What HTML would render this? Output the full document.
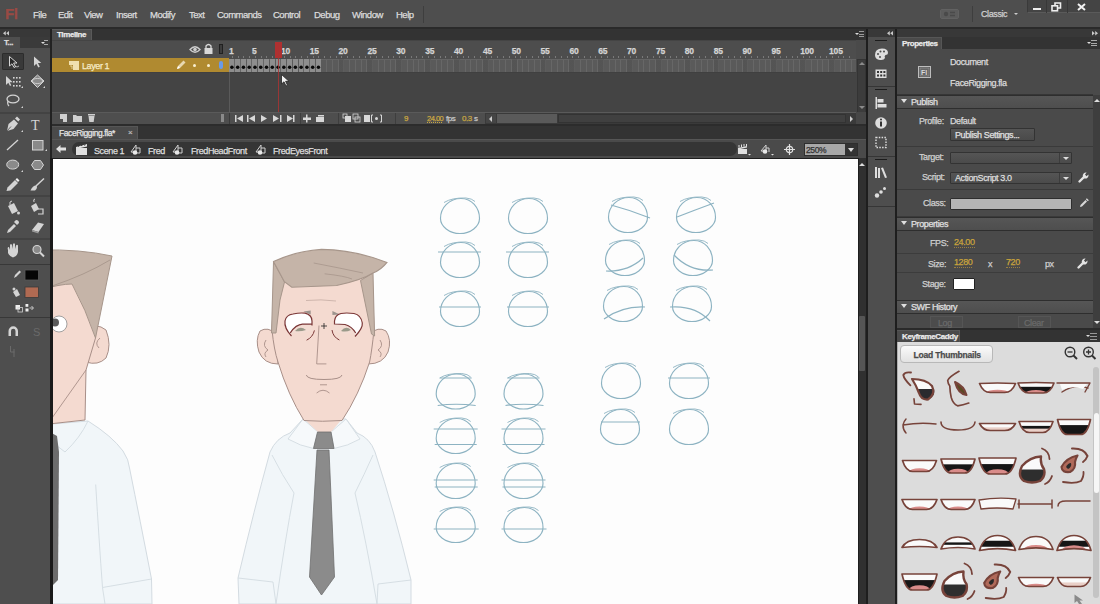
<!DOCTYPE html><html><head><meta charset="utf-8"><style>
*{margin:0;padding:0;box-sizing:border-box}
html,body{width:1100px;height:604px;overflow:hidden;background:#2c2c2c;font-family:"Liberation Sans",sans-serif;position:relative}
.a{position:absolute}
.t{position:absolute;white-space:nowrap;font-size:9px;letter-spacing:-0.4px;color:#d8d8d8;line-height:10px;-webkit-text-stroke:0.25px currentColor}
svg{position:absolute;overflow:visible}
</style></head><body><div class="a" style="left:0;top:0;width:1100px;height:27px;background:#4e4e4e"></div>
<div class="t" style="left:5px;top:6px;font-size:15px;letter-spacing:-0.5px;color:#a24a44;line-height:15px;font-weight:bold;opacity:.9">Fl</div>
<div class="t" style="left:33px;top:10px;font-size:9.5px;letter-spacing:-0.5px;color:#dcdcdc">File</div>
<div class="t" style="left:58px;top:10px;font-size:9.5px;letter-spacing:-0.5px;color:#dcdcdc">Edit</div>
<div class="t" style="left:84px;top:10px;font-size:9.5px;letter-spacing:-0.5px;color:#dcdcdc">View</div>
<div class="t" style="left:116px;top:10px;font-size:9.5px;letter-spacing:-0.5px;color:#dcdcdc">Insert</div>
<div class="t" style="left:150px;top:10px;font-size:9.5px;letter-spacing:-0.5px;color:#dcdcdc">Modify</div>
<div class="t" style="left:189px;top:10px;font-size:9.5px;letter-spacing:-0.5px;color:#dcdcdc">Text</div>
<div class="t" style="left:217px;top:10px;font-size:9.5px;letter-spacing:-0.5px;color:#dcdcdc">Commands</div>
<div class="t" style="left:273px;top:10px;font-size:9.5px;letter-spacing:-0.5px;color:#dcdcdc">Control</div>
<div class="t" style="left:314px;top:10px;font-size:9.5px;letter-spacing:-0.5px;color:#dcdcdc">Debug</div>
<div class="t" style="left:352px;top:10px;font-size:9.5px;letter-spacing:-0.5px;color:#dcdcdc">Window</div>
<div class="t" style="left:396px;top:10px;font-size:9.5px;letter-spacing:-0.5px;color:#dcdcdc">Help</div>
<div class="a" style="left:423px;top:6px;width:1px;height:17px;background:#3e3e3e"></div>
<div class="a" style="left:972px;top:6px;width:1px;height:16px;background:#3e3e3e"></div>
<div class="t" style="left:981px;top:9px;color:#d0d0d0">Classic</div>
<div class="a" style="left:1014px;top:13px;width:0;height:0;border-left:2px solid transparent;border-right:2px solid transparent;border-top:2px solid #ccc"></div>
<div class="a" style="left:1026.5px;top:0;width:73.5px;height:13px;background:#444;border-bottom:1px solid #5a5a5a;border-left:1px solid #3a3a3a"></div>
<div class="a" style="left:1046px;top:0;width:1px;height:13px;background:#383838"></div>
<div class="a" style="left:1066.5px;top:0;width:1px;height:13px;background:#383838"></div>
<div class="a" style="left:1032.5px;top:7.5px;width:8px;height:2.2px;background:#eee"></div>
<svg style="left:1051px;top:2px" width="11" height="10"><rect x="1" y="3.8" width="5.5" height="5" fill="none" stroke="#eee" stroke-width="1.6"/><path d="M4 3.5 V1 H9.5 V6 H7" fill="none" stroke="#eee" stroke-width="1.6"/></svg>
<svg style="left:1077px;top:2.5px" width="9" height="8"><path d="M1 1 L8 7 M8 1 L1 7" stroke="#f2f2f2" stroke-width="2"/></svg>
<svg style="left:940px;top:8.5px" width="19" height="10"><rect x="0.5" y="0.5" width="18" height="9" rx="1.5" fill="#5c5c5c" stroke="#626262"/><circle cx="6" cy="5" r="2.2" fill="#4a4a4a"/><path d="M10 3.5 H15 M10 6.5 H15" stroke="#4a4a4a" stroke-width="1.4"/></svg>
<div class="a" style="left:0;top:27px;width:1100px;height:2px;background:#2a2a2a"></div>
<div class="a" style="left:0;top:29px;width:50px;height:8px;background:#383838"></div>
<svg style="left:2.5px;top:31px" width="7" height="5"><path d="M0 2.2 L2.8 0 V4.4Z M3.2 2.2 L6 0 V4.4Z" fill="#c8c8c8"/></svg>
<div class="a" style="left:0;top:37px;width:50px;height:567px;background:#4e4e4e"></div>
<div class="a" style="left:20px;top:37px;width:30px;height:11px;background:#3a3a3a"></div>
<div class="t" style="left:4px;top:38px;font-size:8px;font-weight:bold;color:#ddd">T...</div>
<div class="a" style="left:41px;top:42px;width:0;height:0;border-left:2px solid transparent;border-right:2px solid transparent;border-top:2px solid #ddd"></div>
<div class="a" style="left:44px;top:40px;width:4px;height:5px;border-top:1px solid #aaa;border-bottom:1px solid #aaa"></div>
<div class="a" style="left:50px;top:29px;width:2px;height:575px;background:#222"></div>
<div class="a" style="left:2px;top:53px;width:21.5px;height:16.5px;background:#393939;border:1px solid #2c2c2c;border-radius:1px"></div>
<svg style="left:0;top:0" width="50" height="604"><path d="M9.5 56.5 L9.5 66 L12 63.8 L14 67.5 L15.5 66.8 L13.6 63 L17 63 Z" fill="#2a2a2a" stroke="#d4d4d4" stroke-width="1"/><path d="M15 66 Q17 68 19 66" fill="none" stroke="#d4d4d4" stroke-width="0.8"/><path d="M34 56.5 L34 66 L36.3 63.8 L38.3 67.5 L39.8 66.8 L37.9 63 L41.3 63 Z" fill="#d4d4d4"/><path d="M6 76 L6 85 L8.3 82.8 L10 86 L11.3 85.3 L9.7 82.2 L12.7 82.2 Z" fill="#d4d4d4"/><rect x="13" y="77" width="1.6" height="1.6" fill="#d4d4d4"/><rect x="16" y="77" width="1.6" height="1.6" fill="#d4d4d4"/><rect x="19" y="77" width="1.6" height="1.6" fill="#d4d4d4"/><rect x="13" y="81" width="1.6" height="1.6" fill="#d4d4d4"/><rect x="16" y="81" width="1.6" height="1.6" fill="#d4d4d4"/><rect x="19" y="81" width="1.6" height="1.6" fill="#d4d4d4"/><rect x="13" y="85" width="1.6" height="1.6" fill="#d4d4d4"/><rect x="16" y="85" width="1.6" height="1.6" fill="#d4d4d4"/><rect x="19" y="85" width="1.6" height="1.6" fill="#d4d4d4"/><path d="M37.5 75 L44 81 L37.5 87.5 L31 81 Z" fill="#8a8a8a" stroke="#d4d4d4" stroke-width="1"/><ellipse cx="37.5" cy="81" rx="5" ry="2.5" fill="none" stroke="#d4d4d4" stroke-width="0.9"/><ellipse cx="13" cy="99" rx="6" ry="3.8" fill="none" stroke="#d4d4d4" stroke-width="1.3"/><path d="M8 101 Q7 104 9 106" fill="none" stroke="#d4d4d4" stroke-width="1.2"/><path d="M7 131 L8.5 124 L14 119.5 L18 123.5 L13.5 129 Z" fill="#d4d4d4"/><path d="M7 131 L11 126.5" stroke="#4b4b4b" stroke-width="0.8"/><path d="M15 118.5 L17 116.5 L20 119.5 L18.3 121.5" fill="#d4d4d4"/><text x="31" y="130" font-family="Liberation Serif" font-size="14" fill="#d4d4d4">T</text><path d="M7 150 L18 140" stroke="#d4d4d4" stroke-width="1.3"/><rect x="32.5" y="140.5" width="10.5" height="9.5" fill="#8a8a8a" stroke="#d4d4d4" stroke-width="1"/><ellipse cx="12.7" cy="164.6" rx="6" ry="4.5" fill="#8a8a8a" stroke="#d4d4d4" stroke-width="1"/><path d="M34.5 160.5 L40.5 160.5 L43.5 165 L40.5 169.5 L34.5 169.5 L31.5 165 Z" fill="#8a8a8a" stroke="#d4d4d4" stroke-width="1"/><path d="M6.5 191 L7.5 187.5 L15 180 L18 183 L10.5 190.5 Z" fill="#d4d4d4"/><path d="M15.5 179.5 L17 178 L19.5 180.5 L18 182" fill="#f0f0f0"/><path d="M36 186 L44 178.5" stroke="#d4d4d4" stroke-width="1.5"/><path d="M30.5 190.5 Q33 185 36.5 185.5 Q38 188 35 190.5 Z" fill="#d4d4d4"/><path d="M8 206 L14 203 L18 211 L12 214 Z" fill="#d4d4d4"/><path d="M10 205 Q9 201 12 201" fill="none" stroke="#d4d4d4" stroke-width="1"/><circle cx="18.5" cy="213" r="1.5" fill="#d4d4d4"/><path d="M31 206 L36 203 L39 209 L34 212 Z" fill="#d4d4d4"/><path d="M34 202 Q33 199 35 199" fill="none" stroke="#d4d4d4" stroke-width="1"/><path d="M38 209 H43 V214 H38" fill="none" stroke="#d4d4d4" stroke-width="1.2"/><path d="M7 233 L8 230 L14 224 L16 226 L10 232 Z" fill="#d4d4d4"/><path d="M14 222 L16 220 Q19 220 19 223 L17 225 Z" fill="#d4d4d4"/><path d="M32 230 L38 222.5 L44 224 L38.5 232 Z" fill="#d4d4d4"/><path d="M32 230 L38.5 232 L38.5 233.5 L32 231.5Z" fill="#9a9a9a"/><path d="M8 250 Q7 247 9 247 L10 250 L10 245 Q11 243 12 245 L12.5 249 L13 244 Q14 242.5 15 244 L15 249 L16 245.5 Q17 244 18 245.5 L18 252 Q17 257 13 257.5 Q10 257 8 253 Z" fill="#d4d4d4"/><circle cx="37" cy="249.5" r="4" fill="#8a8a8a" stroke="#d4d4d4" stroke-width="1.2"/><path d="M40 252.5 L44 256.5" stroke="#d4d4d4" stroke-width="2"/><path d="M14 278 L15 275 L19.5 270.5 L21 272 L16.5 276.5 Z" fill="#d4d4d4"/><rect x="25" y="270" width="13.5" height="10" fill="#050505" stroke="#5a5a5a" stroke-width="0.8"/><path d="M13 292 L17 289 L20 295 L16 297 Z" fill="#d4d4d4"/><circle cx="14" cy="289" r="1.5" fill="#d4d4d4"/><rect x="25" y="287" width="13.5" height="10.5" fill="#b06a52" stroke="#3a3a3a" stroke-width="0.8"/><rect x="15.5" y="305" width="4.5" height="4.5" fill="#eee"/><rect x="18" y="307.5" width="4.5" height="4.5" fill="none" stroke="#d4d4d4" stroke-width="0.8"/><rect x="25.5" y="304" width="2.8" height="2.8" fill="#eee"/><rect x="25.5" y="308.5" width="3" height="3" fill="#eee"/><path d="M29.5 308 H33 M31.5 306 L33.5 308 L31.5 310" fill="none" stroke="#d4d4d4" stroke-width="0.9"/><path d="M8.5 336 V331 A4.7 4.7 0 0 1 18 331 V336 H15.5 V331 A2.2 2.2 0 0 0 11 331 V336 Z" fill="#d4d4d4"/><text x="33" y="336" font-family="Liberation Sans" font-size="11" fill="#6a6a6a">S</text><path d="M10.5 346 V352 H14.5 M14 349 V357" fill="none" stroke="#6a6a6a" stroke-width="1"/><path d="M21 88 h2 v-2z M43 88 h2 v-2z M21 108 h2 v-2z M21 132 h2 v-2z M45 151 h2 v-2z M21 172 h2 v-2z" fill="#d4d4d4"/><rect x="0" y="112.5" width="50" height="1" fill="#383838"/><rect x="0" y="195.5" width="50" height="1" fill="#383838"/><rect x="0" y="238.5" width="50" height="1" fill="#383838"/><rect x="0" y="264" width="50" height="1" fill="#383838"/><rect x="0" y="317" width="50" height="1" fill="#383838"/></svg>
<div class="a" style="left:52px;top:29px;width:814px;height:11px;background:#333"></div>
<div class="a" style="left:52px;top:29px;width:40px;height:12px;background:#4d4d4d;border-top:1px solid #5a5a5a;border-right:1px solid #5a5a5a"></div>
<div class="t" style="left:57px;top:30px;font-size:8px;font-weight:bold;color:#eaeaea">Timeline</div>
<div class="a" style="left:52px;top:40px;width:814px;height:84px;background:#444"></div>
<div class="a" style="left:52px;top:40.5px;width:804px;height:18px;background:#4d4d4d"></div>
<svg style="left:189px;top:45px" width="12" height="9"><path d="M1 4.5 Q6 -1 11 4.5 Q6 10 1 4.5Z" fill="none" stroke="#cfcfcf" stroke-width="1.3"/><circle cx="6" cy="4.5" r="1.8" fill="#cfcfcf"/></svg>
<svg style="left:204px;top:43px" width="9" height="11"><path d="M2 5 V3 Q4.5 0 7 3 V5" fill="none" stroke="#d8d8d8" stroke-width="1.3"/><rect x="0.5" y="5" width="8" height="6" fill="#d8d8d8"/></svg>
<div class="a" style="left:219px;top:44px;width:4px;height:10px;border:1px solid #202020;background:#3c3c3c"></div>
<div class="a" style="left:231.8px;top:56px;width:1px;height:2px;background:#7a7a7a"></div><div class="a" style="left:237.6px;top:56px;width:1px;height:2px;background:#7a7a7a"></div><div class="a" style="left:243.3px;top:56px;width:1px;height:2px;background:#7a7a7a"></div><div class="a" style="left:249.1px;top:56px;width:1px;height:2px;background:#7a7a7a"></div><div class="a" style="left:254.9px;top:56px;width:1px;height:2px;background:#7a7a7a"></div><div class="a" style="left:260.7px;top:56px;width:1px;height:2px;background:#7a7a7a"></div><div class="a" style="left:266.4px;top:56px;width:1px;height:2px;background:#7a7a7a"></div><div class="a" style="left:272.2px;top:56px;width:1px;height:2px;background:#7a7a7a"></div><div class="a" style="left:278.0px;top:56px;width:1px;height:2px;background:#7a7a7a"></div><div class="a" style="left:283.7px;top:56px;width:1px;height:2px;background:#7a7a7a"></div><div class="a" style="left:289.5px;top:56px;width:1px;height:2px;background:#7a7a7a"></div><div class="a" style="left:295.3px;top:56px;width:1px;height:2px;background:#7a7a7a"></div><div class="a" style="left:301.0px;top:56px;width:1px;height:2px;background:#7a7a7a"></div><div class="a" style="left:306.8px;top:56px;width:1px;height:2px;background:#7a7a7a"></div><div class="a" style="left:312.6px;top:56px;width:1px;height:2px;background:#7a7a7a"></div><div class="a" style="left:318.4px;top:56px;width:1px;height:2px;background:#7a7a7a"></div><div class="a" style="left:324.1px;top:56px;width:1px;height:2px;background:#7a7a7a"></div><div class="a" style="left:329.9px;top:56px;width:1px;height:2px;background:#7a7a7a"></div><div class="a" style="left:335.7px;top:56px;width:1px;height:2px;background:#7a7a7a"></div><div class="a" style="left:341.4px;top:56px;width:1px;height:2px;background:#7a7a7a"></div><div class="a" style="left:347.2px;top:56px;width:1px;height:2px;background:#7a7a7a"></div><div class="a" style="left:353.0px;top:56px;width:1px;height:2px;background:#7a7a7a"></div><div class="a" style="left:358.7px;top:56px;width:1px;height:2px;background:#7a7a7a"></div><div class="a" style="left:364.5px;top:56px;width:1px;height:2px;background:#7a7a7a"></div><div class="a" style="left:370.3px;top:56px;width:1px;height:2px;background:#7a7a7a"></div><div class="a" style="left:376.1px;top:56px;width:1px;height:2px;background:#7a7a7a"></div><div class="a" style="left:381.8px;top:56px;width:1px;height:2px;background:#7a7a7a"></div><div class="a" style="left:387.6px;top:56px;width:1px;height:2px;background:#7a7a7a"></div><div class="a" style="left:393.4px;top:56px;width:1px;height:2px;background:#7a7a7a"></div><div class="a" style="left:399.1px;top:56px;width:1px;height:2px;background:#7a7a7a"></div><div class="a" style="left:404.9px;top:56px;width:1px;height:2px;background:#7a7a7a"></div><div class="a" style="left:410.7px;top:56px;width:1px;height:2px;background:#7a7a7a"></div><div class="a" style="left:416.4px;top:56px;width:1px;height:2px;background:#7a7a7a"></div><div class="a" style="left:422.2px;top:56px;width:1px;height:2px;background:#7a7a7a"></div><div class="a" style="left:428.0px;top:56px;width:1px;height:2px;background:#7a7a7a"></div><div class="a" style="left:433.8px;top:56px;width:1px;height:2px;background:#7a7a7a"></div><div class="a" style="left:439.5px;top:56px;width:1px;height:2px;background:#7a7a7a"></div><div class="a" style="left:445.3px;top:56px;width:1px;height:2px;background:#7a7a7a"></div><div class="a" style="left:451.1px;top:56px;width:1px;height:2px;background:#7a7a7a"></div><div class="a" style="left:456.8px;top:56px;width:1px;height:2px;background:#7a7a7a"></div><div class="a" style="left:462.6px;top:56px;width:1px;height:2px;background:#7a7a7a"></div><div class="a" style="left:468.4px;top:56px;width:1px;height:2px;background:#7a7a7a"></div><div class="a" style="left:474.1px;top:56px;width:1px;height:2px;background:#7a7a7a"></div><div class="a" style="left:479.9px;top:56px;width:1px;height:2px;background:#7a7a7a"></div><div class="a" style="left:485.7px;top:56px;width:1px;height:2px;background:#7a7a7a"></div><div class="a" style="left:491.4px;top:56px;width:1px;height:2px;background:#7a7a7a"></div><div class="a" style="left:497.2px;top:56px;width:1px;height:2px;background:#7a7a7a"></div><div class="a" style="left:503.0px;top:56px;width:1px;height:2px;background:#7a7a7a"></div><div class="a" style="left:508.8px;top:56px;width:1px;height:2px;background:#7a7a7a"></div><div class="a" style="left:514.5px;top:56px;width:1px;height:2px;background:#7a7a7a"></div><div class="a" style="left:520.3px;top:56px;width:1px;height:2px;background:#7a7a7a"></div><div class="a" style="left:526.1px;top:56px;width:1px;height:2px;background:#7a7a7a"></div><div class="a" style="left:531.8px;top:56px;width:1px;height:2px;background:#7a7a7a"></div><div class="a" style="left:537.6px;top:56px;width:1px;height:2px;background:#7a7a7a"></div><div class="a" style="left:543.4px;top:56px;width:1px;height:2px;background:#7a7a7a"></div><div class="a" style="left:549.1px;top:56px;width:1px;height:2px;background:#7a7a7a"></div><div class="a" style="left:554.9px;top:56px;width:1px;height:2px;background:#7a7a7a"></div><div class="a" style="left:560.7px;top:56px;width:1px;height:2px;background:#7a7a7a"></div><div class="a" style="left:566.5px;top:56px;width:1px;height:2px;background:#7a7a7a"></div><div class="a" style="left:572.2px;top:56px;width:1px;height:2px;background:#7a7a7a"></div><div class="a" style="left:578.0px;top:56px;width:1px;height:2px;background:#7a7a7a"></div><div class="a" style="left:583.8px;top:56px;width:1px;height:2px;background:#7a7a7a"></div><div class="a" style="left:589.5px;top:56px;width:1px;height:2px;background:#7a7a7a"></div><div class="a" style="left:595.3px;top:56px;width:1px;height:2px;background:#7a7a7a"></div><div class="a" style="left:601.1px;top:56px;width:1px;height:2px;background:#7a7a7a"></div><div class="a" style="left:606.8px;top:56px;width:1px;height:2px;background:#7a7a7a"></div><div class="a" style="left:612.6px;top:56px;width:1px;height:2px;background:#7a7a7a"></div><div class="a" style="left:618.4px;top:56px;width:1px;height:2px;background:#7a7a7a"></div><div class="a" style="left:624.2px;top:56px;width:1px;height:2px;background:#7a7a7a"></div><div class="a" style="left:629.9px;top:56px;width:1px;height:2px;background:#7a7a7a"></div><div class="a" style="left:635.7px;top:56px;width:1px;height:2px;background:#7a7a7a"></div><div class="a" style="left:641.5px;top:56px;width:1px;height:2px;background:#7a7a7a"></div><div class="a" style="left:647.2px;top:56px;width:1px;height:2px;background:#7a7a7a"></div><div class="a" style="left:653.0px;top:56px;width:1px;height:2px;background:#7a7a7a"></div><div class="a" style="left:658.8px;top:56px;width:1px;height:2px;background:#7a7a7a"></div><div class="a" style="left:664.5px;top:56px;width:1px;height:2px;background:#7a7a7a"></div><div class="a" style="left:670.3px;top:56px;width:1px;height:2px;background:#7a7a7a"></div><div class="a" style="left:676.1px;top:56px;width:1px;height:2px;background:#7a7a7a"></div><div class="a" style="left:681.9px;top:56px;width:1px;height:2px;background:#7a7a7a"></div><div class="a" style="left:687.6px;top:56px;width:1px;height:2px;background:#7a7a7a"></div><div class="a" style="left:693.4px;top:56px;width:1px;height:2px;background:#7a7a7a"></div><div class="a" style="left:699.2px;top:56px;width:1px;height:2px;background:#7a7a7a"></div><div class="a" style="left:704.9px;top:56px;width:1px;height:2px;background:#7a7a7a"></div><div class="a" style="left:710.7px;top:56px;width:1px;height:2px;background:#7a7a7a"></div><div class="a" style="left:716.5px;top:56px;width:1px;height:2px;background:#7a7a7a"></div><div class="a" style="left:722.2px;top:56px;width:1px;height:2px;background:#7a7a7a"></div><div class="a" style="left:728.0px;top:56px;width:1px;height:2px;background:#7a7a7a"></div><div class="a" style="left:733.8px;top:56px;width:1px;height:2px;background:#7a7a7a"></div><div class="a" style="left:739.6px;top:56px;width:1px;height:2px;background:#7a7a7a"></div><div class="a" style="left:745.3px;top:56px;width:1px;height:2px;background:#7a7a7a"></div><div class="a" style="left:751.1px;top:56px;width:1px;height:2px;background:#7a7a7a"></div><div class="a" style="left:756.9px;top:56px;width:1px;height:2px;background:#7a7a7a"></div><div class="a" style="left:762.6px;top:56px;width:1px;height:2px;background:#7a7a7a"></div><div class="a" style="left:768.4px;top:56px;width:1px;height:2px;background:#7a7a7a"></div><div class="a" style="left:774.2px;top:56px;width:1px;height:2px;background:#7a7a7a"></div><div class="a" style="left:780.0px;top:56px;width:1px;height:2px;background:#7a7a7a"></div><div class="a" style="left:785.7px;top:56px;width:1px;height:2px;background:#7a7a7a"></div><div class="a" style="left:791.5px;top:56px;width:1px;height:2px;background:#7a7a7a"></div><div class="a" style="left:797.3px;top:56px;width:1px;height:2px;background:#7a7a7a"></div><div class="a" style="left:803.0px;top:56px;width:1px;height:2px;background:#7a7a7a"></div><div class="a" style="left:808.8px;top:56px;width:1px;height:2px;background:#7a7a7a"></div><div class="a" style="left:814.6px;top:56px;width:1px;height:2px;background:#7a7a7a"></div><div class="a" style="left:820.3px;top:56px;width:1px;height:2px;background:#7a7a7a"></div><div class="a" style="left:826.1px;top:56px;width:1px;height:2px;background:#7a7a7a"></div><div class="a" style="left:831.9px;top:56px;width:1px;height:2px;background:#7a7a7a"></div><div class="a" style="left:837.6px;top:56px;width:1px;height:2px;background:#7a7a7a"></div><div class="a" style="left:843.4px;top:56px;width:1px;height:2px;background:#7a7a7a"></div><div class="a" style="left:849.2px;top:56px;width:1px;height:2px;background:#7a7a7a"></div>
<div class="t" style="left:229.0px;top:46px;font-size:8.5px;letter-spacing:-0.2px;color:#d4d4d4;font-weight:bold">1</div>
<div class="t" style="left:252.1px;top:46px;font-size:8.5px;letter-spacing:-0.2px;color:#d4d4d4;font-weight:bold">5</div>
<div class="t" style="left:280.9px;top:46px;font-size:8.5px;letter-spacing:-0.2px;color:#d4d4d4;font-weight:bold">10</div>
<div class="t" style="left:309.8px;top:46px;font-size:8.5px;letter-spacing:-0.2px;color:#d4d4d4;font-weight:bold">15</div>
<div class="t" style="left:338.6px;top:46px;font-size:8.5px;letter-spacing:-0.2px;color:#d4d4d4;font-weight:bold">20</div>
<div class="t" style="left:367.5px;top:46px;font-size:8.5px;letter-spacing:-0.2px;color:#d4d4d4;font-weight:bold">25</div>
<div class="t" style="left:396.3px;top:46px;font-size:8.5px;letter-spacing:-0.2px;color:#d4d4d4;font-weight:bold">30</div>
<div class="t" style="left:425.2px;top:46px;font-size:8.5px;letter-spacing:-0.2px;color:#d4d4d4;font-weight:bold">35</div>
<div class="t" style="left:454.0px;top:46px;font-size:8.5px;letter-spacing:-0.2px;color:#d4d4d4;font-weight:bold">40</div>
<div class="t" style="left:482.9px;top:46px;font-size:8.5px;letter-spacing:-0.2px;color:#d4d4d4;font-weight:bold">45</div>
<div class="t" style="left:511.7px;top:46px;font-size:8.5px;letter-spacing:-0.2px;color:#d4d4d4;font-weight:bold">50</div>
<div class="t" style="left:540.6px;top:46px;font-size:8.5px;letter-spacing:-0.2px;color:#d4d4d4;font-weight:bold">55</div>
<div class="t" style="left:569.4px;top:46px;font-size:8.5px;letter-spacing:-0.2px;color:#d4d4d4;font-weight:bold">60</div>
<div class="t" style="left:598.3px;top:46px;font-size:8.5px;letter-spacing:-0.2px;color:#d4d4d4;font-weight:bold">65</div>
<div class="t" style="left:627.1px;top:46px;font-size:8.5px;letter-spacing:-0.2px;color:#d4d4d4;font-weight:bold">70</div>
<div class="t" style="left:656.0px;top:46px;font-size:8.5px;letter-spacing:-0.2px;color:#d4d4d4;font-weight:bold">75</div>
<div class="t" style="left:684.8px;top:46px;font-size:8.5px;letter-spacing:-0.2px;color:#d4d4d4;font-weight:bold">80</div>
<div class="t" style="left:713.7px;top:46px;font-size:8.5px;letter-spacing:-0.2px;color:#d4d4d4;font-weight:bold">85</div>
<div class="t" style="left:742.5px;top:46px;font-size:8.5px;letter-spacing:-0.2px;color:#d4d4d4;font-weight:bold">90</div>
<div class="t" style="left:771.4px;top:46px;font-size:8.5px;letter-spacing:-0.2px;color:#d4d4d4;font-weight:bold">95</div>
<div class="t" style="left:800.2px;top:46px;font-size:8.5px;letter-spacing:-0.2px;color:#d4d4d4;font-weight:bold">100</div>
<div class="t" style="left:829.1px;top:46px;font-size:8.5px;letter-spacing:-0.2px;color:#d4d4d4;font-weight:bold">105</div>
<div class="a" style="left:52px;top:58px;width:177px;height:14px;background:#b08a30"></div>
<svg style="left:69px;top:61px" width="10" height="9"><rect x="0" y="0" width="10" height="9" fill="#f0e0b0"/><path d="M0 9 L0 4 L4 4 L4 9Z" fill="#b08a30"/><path d="M1 5 h2 v3" fill="none" stroke="#f0e0b0" stroke-width="0.8"/></svg>
<div class="t" style="left:82px;top:61px;font-size:9px;color:#f6ecc8">Layer 1</div>
<svg style="left:176px;top:60px" width="10" height="10"><path d="M1 9 L2 6 L7.5 0.5 L9.5 2.5 L4 8 Z" fill="#e8d8b0"/><path d="M1 9 L2 6 L4 8Z" fill="#fff"/></svg>
<div class="a" style="left:193px;top:64px;width:3px;height:3px;border-radius:50%;background:#f8eed0"></div>
<div class="a" style="left:207px;top:64px;width:3px;height:3px;border-radius:50%;background:#f8eed0"></div>
<div class="a" style="left:219px;top:61px;width:4px;height:8px;border-radius:2px;background:#6a9ae8"></div>
<div class="a" style="left:229px;top:58.5px;width:627px;height:13.5px;background:repeating-linear-gradient(90deg,#5a5a5a 0,#5a5a5a 4.77px,#676767 4.77px,#676767 5.77px);border-top:1px solid #646464"></div>
<div class="a" style="left:229px;top:58px;width:627px;height:14px;background:repeating-linear-gradient(90deg,transparent 0,transparent 23.08px,#4a4a4a 23.08px,#4a4a4a 28.85px);opacity:.35"></div>
<div class="a" style="left:229.3px;top:59px;width:4.9px;height:13px;background:#8e8e8e"></div><div class="a" style="left:235.1px;top:59px;width:4.9px;height:13px;background:#8e8e8e"></div><div class="a" style="left:240.8px;top:59px;width:4.9px;height:13px;background:#8e8e8e"></div><div class="a" style="left:246.6px;top:59px;width:4.9px;height:13px;background:#8e8e8e"></div><div class="a" style="left:252.4px;top:59px;width:4.9px;height:13px;background:#8e8e8e"></div><div class="a" style="left:258.2px;top:59px;width:4.9px;height:13px;background:#8e8e8e"></div><div class="a" style="left:263.9px;top:59px;width:4.9px;height:13px;background:#8e8e8e"></div><div class="a" style="left:269.7px;top:59px;width:4.9px;height:13px;background:#8e8e8e"></div><div class="a" style="left:275.5px;top:59px;width:4.9px;height:13px;background:#8e8e8e"></div><div class="a" style="left:281.2px;top:59px;width:4.9px;height:13px;background:#8e8e8e"></div><div class="a" style="left:287.0px;top:59px;width:4.9px;height:13px;background:#8e8e8e"></div><div class="a" style="left:292.8px;top:59px;width:4.9px;height:13px;background:#8e8e8e"></div><div class="a" style="left:298.5px;top:59px;width:4.9px;height:13px;background:#8e8e8e"></div><div class="a" style="left:304.3px;top:59px;width:4.9px;height:13px;background:#8e8e8e"></div><div class="a" style="left:310.1px;top:59px;width:4.9px;height:13px;background:#8e8e8e"></div><div class="a" style="left:315.9px;top:59px;width:4.9px;height:13px;background:#8e8e8e"></div>
<svg style="left:0;top:0" width="400" height="80"><circle cx="231.90" cy="67.3" r="1.75" fill="#080808"/><circle cx="237.67" cy="67.3" r="1.75" fill="#080808"/><circle cx="243.44" cy="67.3" r="1.75" fill="#080808"/><circle cx="249.21" cy="67.3" r="1.75" fill="#080808"/><circle cx="254.98" cy="67.3" r="1.75" fill="#080808"/><circle cx="260.75" cy="67.3" r="1.75" fill="#080808"/><circle cx="266.52" cy="67.3" r="1.75" fill="#080808"/><circle cx="272.29" cy="67.3" r="1.75" fill="#080808"/><circle cx="278.06" cy="67.3" r="1.75" fill="#080808"/><circle cx="283.83" cy="67.3" r="1.75" fill="#080808"/><circle cx="289.60" cy="67.3" r="1.75" fill="#080808"/><circle cx="295.37" cy="67.3" r="1.75" fill="#080808"/><circle cx="301.14" cy="67.3" r="1.75" fill="#080808"/><circle cx="306.91" cy="67.3" r="1.75" fill="#080808"/><circle cx="312.68" cy="67.3" r="1.75" fill="#080808"/><circle cx="318.45" cy="67.3" r="1.75" fill="#080808"/></svg>
<div class="a" style="left:52px;top:72px;width:804px;height:1px;background:#404040"></div>
<div class="a" style="left:229px;top:72px;width:1px;height:40px;background:#5a5a5a"></div>
<div class="a" style="left:274.5px;top:42px;width:7px;height:16px;background:#b03030"></div>
<div class="a" style="left:277.5px;top:42px;width:1px;height:70px;background:#a83434;opacity:.85"></div>
<svg style="left:281px;top:74px" width="9" height="13"><path d="M0.5 0.5 L0.5 10 L3 7.8 L5 12 L6.5 11.3 L4.6 7.3 L8 7.3 Z" fill="#f2f2f2" stroke="#222" stroke-width="0.8"/></svg>
<div class="a" style="left:856px;top:40px;width:10px;height:18.5px;background:#4a4a4a"></div>
<div class="a" style="left:857px;top:58.5px;width:9px;height:54px;background:#3c3c3c;border:1px solid #343434"></div>
<div class="a" style="left:858.5px;top:62px;width:0;height:0;border-left:3px solid transparent;border-right:3px solid transparent;border-bottom:3px solid #8a8a8a"></div>
<div class="a" style="left:858.5px;top:106px;width:0;height:0;border-left:3px solid transparent;border-right:3px solid transparent;border-top:3px solid #8a8a8a"></div>
<div class="a" style="left:855px;top:33px;width:0;height:0;border-left:2px solid transparent;border-right:2px solid transparent;border-top:2px solid #ddd"></div>
<div class="a" style="left:859px;top:31px;width:5px;height:6px;border-top:1px solid #999;border-bottom:1px solid #999;background:linear-gradient(#999,#999) 0 2px/5px 1px no-repeat"></div>
<div class="a" style="left:52px;top:112px;width:804px;height:12px;background:#4e4e4e;border-top:1px solid #5a5a5a"></div>
<svg style="left:60px;top:114px" width="40" height="9"><rect x="0" y="0" width="7" height="8" fill="#cfcfcf"/><rect x="0" y="5" width="3" height="3" fill="#4e4e4e"/><path d="M13 1 h3 l1 1 h5 v6 h-9z" fill="#cfcfcf"/><rect x="28" y="0" width="7" height="1.5" fill="#cfcfcf"/><path d="M28.5 2 h6 l-0.8 6 h-4.4z" fill="#cfcfcf"/></svg>
<div class="a" style="left:221px;top:114px;width:3px;height:8px;background:#8a8a8a"></div>
<div class="a" style="left:229px;top:113px;width:1px;height:11px;background:#3a3a3a"></div>
<svg style="left:233px;top:114px" width="180" height="9" fill="#d8d8d8"><rect x="2" y="1" width="1.5" height="7"/><path d="M10 1 L4 4.5 L10 8Z"/><rect x="14" y="1" width="1.5" height="7"/><path d="M22 1 L16 4.5 L22 8Z"/><path d="M28 1 L34 4.5 L28 8Z"/><path d="M40 1 L46 4.5 L40 8Z"/><rect x="47" y="1" width="1.5" height="7"/><path d="M54 1 L60 4.5 L54 8Z"/><rect x="60" y="1" width="1.5" height="7"/><rect x="73" y="0.5" width="1.5" height="8"/><rect x="70" y="3.5" width="8" height="2.5"/><path d="M83 3 h8 v5 h-8z M85 1 h6 v1.5 h-6z"/><rect x="112" y="2" width="6" height="6"/><rect x="110" y="0" width="4" height="4" fill="none" stroke="#d8d8d8" stroke-width="0.8"/><rect x="120" y="0" width="5" height="5" fill="none" stroke="#d8d8d8" stroke-width="0.8"/><rect x="122" y="3" width="5" height="5" fill="none" stroke="#d8d8d8" stroke-width="0.8"/><rect x="131" y="1" width="6" height="7"/><path d="M140 1 h-1.5 v7 h1.5 M147 1 h1.5 v7 h-1.5" fill="none" stroke="#d8d8d8" stroke-width="1"/><circle cx="143.5" cy="4.5" r="1.5"/></svg>
<div class="a" style="left:300px;top:113px;width:1px;height:11px;background:#3e3e3e"></div>
<div class="a" style="left:338px;top:113px;width:1px;height:11px;background:#3e3e3e"></div>
<div class="a" style="left:395px;top:113px;width:1px;height:11px;background:#3e3e3e"></div>
<div class="t" style="left:404px;top:114px;font-size:8px;color:#c8a642">9</div>
<div class="t" style="left:427px;top:114px;font-size:7.5px;letter-spacing:-0.5px;color:#c8a642;text-decoration:underline dotted">24.00</div>
<div class="t" style="left:446px;top:114px;font-size:8px;color:#c8c8c8">fps</div>
<div class="t" style="left:462px;top:114px;font-size:8px;color:#c8a642">0.3</div>
<div class="t" style="left:474px;top:114px;font-size:8px;color:#c8c8c8">s</div>
<div class="a" style="left:485px;top:113px;width:371px;height:11px;background:#3a3a3a"></div>
<div class="a" style="left:486px;top:114px;width:10px;height:9px;background:#454545"></div>
<div class="a" style="left:489px;top:115.5px;width:0;height:0;border-top:3px solid transparent;border-bottom:3px solid transparent;border-right:3px solid #ccc"></div>
<div class="a" style="left:497px;top:114px;width:60px;height:9px;background:#5a5a5a"></div>
<div class="a" style="left:558px;top:114px;width:288px;height:9px;background:#404040;border:1px solid #333"></div>
<div class="a" style="left:850px;top:115.5px;width:0;height:0;border-top:3px solid transparent;border-bottom:3px solid transparent;border-left:3px solid #ccc"></div>
<div class="a" style="left:856px;top:112px;width:10px;height:12px;background:#474747"></div>
<div class="a" style="left:52px;top:124px;width:814px;height:2px;background:#2c2c2c"></div>
<div class="a" style="left:52px;top:126px;width:814px;height:13px;background:#333"></div>
<div class="a" style="left:52px;top:126px;width:86px;height:13px;background:#4a4a4a;border-top:1px solid #565656;border-right:1px solid #565656"></div>
<div class="t" style="left:59px;top:128px;font-size:8.5px;color:#e6e6e6">FaceRigging.fla*</div>
<div class="t" style="left:128px;top:128px;font-size:8px;color:#bbb">&#215;</div>
<div class="a" style="left:52px;top:139px;width:814px;height:19px;background:#4a4a4a;border-top:1px solid #565656"></div>
<div class="a" style="left:72px;top:142px;width:665px;height:14px;background:#353535;border-radius:7px"></div>
<svg style="left:56px;top:145px" width="10" height="8"><path d="M0 4 L4.5 0 V2.5 H10 V5.5 H4.5 V8Z" fill="#e0e0e0"/></svg>
<svg style="left:76px;top:144px" width="12" height="11"><path d="M0 4 h11 v7 h-11z" fill="#e0e0e0"/><path d="M0 3 L11 0 L11 2.5 L0 5z" fill="#e0e0e0"/><path d="M2 2.5 L3.5 1.7 M5 1.7 L6.5 1 M8 1.2 L9.5 0.7" stroke="#3c3c3c" stroke-width="1"/></svg>
<div class="t" style="left:94px;top:146px;font-size:9px;color:#dedede">Scene 1</div>
<svg style="left:130px;top:144px" width="12" height="11"><path d="M1 8 L6 1 L6 8 Z" fill="none" stroke="#d0d0d0" stroke-width="1"/><path d="M6 4 h4 v5 h-4" fill="none" stroke="#d0d0d0" stroke-width="1"/><circle cx="5" cy="8.5" r="2.3" fill="#e8e8e8"/></svg>
<div class="t" style="left:148px;top:146px;font-size:9px;color:#dedede">Fred</div>
<svg style="left:172px;top:144px" width="12" height="11"><path d="M1 8 L6 1 L6 8 Z" fill="none" stroke="#d0d0d0" stroke-width="1"/><path d="M6 4 h4 v5 h-4" fill="none" stroke="#d0d0d0" stroke-width="1"/><circle cx="5" cy="8.5" r="2.3" fill="#e8e8e8"/></svg>
<div class="t" style="left:191px;top:146px;font-size:9px;color:#dedede">FredHeadFront</div>
<svg style="left:255px;top:144px" width="12" height="11"><path d="M1 8 L6 1 L6 8 Z" fill="none" stroke="#d0d0d0" stroke-width="1"/><path d="M6 4 h4 v5 h-4" fill="none" stroke="#d0d0d0" stroke-width="1"/><circle cx="5" cy="8.5" r="2.3" fill="#e8e8e8"/></svg>
<div class="t" style="left:273px;top:146px;font-size:9px;color:#dedede">FredEyesFront</div>
<svg style="left:738px;top:144px" width="14" height="12"><path d="M0 5 h9 v5 h-9z" fill="#e0e0e0"/><path d="M0 4 L9 2 V3.5 L0 5.5z" fill="#e0e0e0"/><path d="M1 3.5 V1 M3.5 3 V0.5 M6 2.5 V0 M8.5 2 V0" stroke="#e0e0e0" stroke-width="1"/><path d="M10 10 h3 l-1.5 1.5z" fill="#e0e0e0"/></svg>
<svg style="left:760px;top:144px" width="16" height="12"><path d="M1 7 L6 1 L6 7 Z" fill="none" stroke="#d0d0d0" stroke-width="1"/><path d="M6 4 h3 v4" fill="none" stroke="#d0d0d0" stroke-width="1"/><circle cx="5" cy="7.5" r="2.3" fill="#e8e8e8"/><path d="M11 10 h3 l-1.5 1.5z" fill="#e0e0e0"/></svg>
<svg style="left:784px;top:144px" width="11" height="11"><circle cx="5.5" cy="5.5" r="3.2" fill="none" stroke="#e0e0e0" stroke-width="1.2"/><path d="M5.5 0 V11 M0 5.5 H11" stroke="#e0e0e0" stroke-width="1.2"/></svg>
<div class="a" style="left:804px;top:143px;width:54px;height:13px;background:#333;border:1px solid #2e2e2e"></div>
<div class="a" style="left:805px;top:144px;width:40px;height:11px;background:#a8a8a8"></div>
<div class="t" style="left:806px;top:145px;font-size:8.5px;color:#333">250%</div>
<div class="a" style="left:848px;top:148px;width:0;height:0;border-left:3px solid transparent;border-right:3px solid transparent;border-top:4px solid #ddd"></div>
<div class="a" style="left:52px;top:158px;width:806px;height:446px;background:#fdfdfd"></div>
<div class="a" style="left:52px;top:158px;width:806px;height:446px;overflow:hidden"><svg style="left:-52px;top:-158px" width="1100" height="604" viewBox="0 0 1100 604"><path d="M303 419 L290 433 Q276 438 270 452 Q254 510 238 578 L239 604 L411 604 L411 580 Q394 510 375 452 Q370 438 357 433 L346 419 Z" fill="#f1f6f9" stroke="#d3dbe1" stroke-width="1"/><path d="M238 578 L273 582 L276 604 M411 580 L378 584 L377 604 M294 493 Q285 540 276 604 M355 493 Q366 540 377 604 M272 455 Q282 475 294 493 M373 455 Q364 475 355 493" fill="none" stroke="#d3dbe1" stroke-width="0.9"/><path d="M303 419 L318 432 L313.5 448.5 Q300 446 288 439 Z M346 419 L331 432 L334 448.5 Q348 446 360 439 Z" fill="#f6f9fb" stroke="#d3dbe1" stroke-width="0.9"/><path d="M303 418 L343 418 L331 432 L318 432 Z" fill="#f4dad0"/><path d="M317.5 432 L331 432 L334 448.5 L313.5 448.5 Z" fill="#8b8b8b" stroke="#707070" stroke-width="0.8"/><path d="M317 450 L329 450 L334.5 577 L321.5 595 L309.5 577 Z" fill="#8b8b8b" stroke="#707070" stroke-width="0.8"/><path d="M276 334 Q268 326 260 331 Q255 340 259 352 Q264 364 278 364 Z" fill="#f4dad0" stroke="#a88f88" stroke-width="1"/><path d="M370 334 Q378 326 386 331 Q392 340 388 352 Q383 364 368 364 Z" fill="#f4dad0" stroke="#a88f88" stroke-width="1"/><path d="M266 340 Q262 346 268 350 Q263 353 266 357 M380 340 Q384 346 378 350 Q383 353 380 357" fill="none" stroke="#a88f88" stroke-width="0.9"/><path d="M275 270 L272 330 Q274 350 278 362 Q288 395 304 420.5 Q322 422 342 420.5 Q359 395 369.6 362 Q372 350 374 330 L372 270 Z" fill="#f4dad0" stroke="#a88f88" stroke-width="1"/><path d="M273.5 262 L271.5 333 L276 333 L280 300 L284.5 282 Z" fill="#c5b4a8" stroke="#a7968b" stroke-width="1"/><path d="M360.5 280.5 L373 273 L374.6 336 L371.5 334 Z" fill="#c5b4a8" stroke="#a7968b" stroke-width="1"/><path d="M273.5 261.5 Q296 251 321.5 249.4 Q355 250 387 262.4 Q381 270 373 273 Q362 280 336.6 285.5 Q310 286.5 291.8 287.2 L284.4 281.7 Z" fill="#c5b4a8" stroke="#a7968b" stroke-width="1.1"/><path d="M313.7 263 Q340 268 363 273 M324.6 273.8 Q345 276 352 279" fill="none" stroke="#a7968b" stroke-width="0.8"/><path d="M306 300.5 Q321 299 336 301" fill="none" stroke="#c9b1a8" stroke-width="0.9"/><path d="M303.4 311.5 L310.7 310.5 L310.7 314.5 Z M332.4 311 L340 314.5 L332.4 315Z" fill="#9c948e"/><path d="M291.5 336 Q284 328 285 321 Q286 315 293 314 Q300 312.5 305 313.2 Q312 315 312 321 L312 325.5 L302.5 324.2 Q295 326 290.3 332.8 Z" fill="#fff"/><path d="M290.3 332.8 Q296 324 302.5 324.2 L312 324.5 L312 330 Q306 333 300 333 Q294 333 290.3 332.8Z" fill="#f3dcd3"/><path d="M295 331 Q300 325 306 330 Q300 332 295 331Z" fill="#9a9a8a"/><path d="M291.5 336 Q284 328 285 321 Q286 315 293 314 Q300 312.5 305 313.2 Q312 315 312 321 L312 325.5 M290.3 332.8 Q296 324.5 302.5 324.2 L311.5 324.2" fill="none" stroke="#7a3636" stroke-width="1.2"/><path d="M355 336.5 Q363 328 362.3 323 Q361 315 354 313.5 Q346 312.5 341 313.5 Q335 315 334.5 321 L334.5 324.5 L345 325 Q352 327 355.7 333 Z" fill="#fff"/><path d="M334.5 324.5 L345 325 Q352 327 355.7 333 Q350 334 344 334 Q338 333 334.5 330Z" fill="#f3dcd3"/><path d="M341 331 Q346 325 351 330 Q346 332.5 341 331Z" fill="#9a9a8a"/><path d="M355 336.5 Q363 328 362.3 323 Q361 315 354 313.5 Q346 312.5 341 313.5 Q335 315 334.5 321 L334.5 324.5 M334.5 324 L345 324.5 Q352 326.5 355.7 333" fill="none" stroke="#7a3636" stroke-width="1.2"/><path d="M314.4 330.4 Q313 337 306.6 340.2 M332 330 Q333 337 339.4 340" fill="none" stroke="#7a3636" stroke-width="1"/><path d="M321 326 H327 M324 323 V329" stroke="#222" stroke-width="0.8"/><path d="M319 325.5 L316.7 363.9 L326.4 363.9" fill="none" stroke="#a88f88" stroke-width="0.9"/><path d="M306.3 375 Q307 379.5 324 379.5 Q341 379.5 342 375" fill="none" stroke="#a88f88" stroke-width="1"/><path d="M320 384.8 H327 M316.6 393 Q323 387.5 329.5 393" fill="none" stroke="#a88f88" stroke-width="0.9"/><path d="M20 430 L40 425 L88 421 Q112 436 123 451 Q129 460 129.5 468 Q140 520 151.5 579 L152 604 L20 604 Z" fill="#f1f6f9" stroke="#d3dbe1" stroke-width="1"/><path d="M102.5 587.5 L151.5 579 M102.5 587.5 L105 604 M88 421 Q80 438 65 452 L52 442 M95.7 484.5 Q99 540 102.5 587.5" fill="none" stroke="#d3dbe1" stroke-width="0.9"/><path d="M86 330 Q96 322 106 330 Q112 345 106 358 Q98 366 86 362 Z" fill="#f4dad0" stroke="#a88f88" stroke-width="1"/><path d="M100 338 Q94 343 99 348" fill="none" stroke="#a88f88" stroke-width="0.9"/><path d="M40 260 L96 300 L95.5 338 L86 370 L85 420 L40 425 Z" fill="#f4dad0" stroke="#a88f88" stroke-width="1"/><path d="M86 370 L52 418" fill="none" stroke="#a88f88" stroke-width="0.9"/><path d="M40 250 Q80 249 112 256 L95.5 338 Q86 310 72 284 Q60 284 40 290 Z" fill="#c5b4a8" stroke="#a7968b" stroke-width="1"/><path d="M52 286 Q85 275 110 260" fill="none" stroke="#a7968b" stroke-width="0.9"/><circle cx="59" cy="324" r="8" fill="#fff" stroke="#8c8c8c" stroke-width="0.8"/><circle cx="55" cy="322.5" r="4" fill="#5a5a5a"/><path d="M50 432 L57 436 L59 452 L58 580 L50 588Z" fill="#6c6c6c"/><path d="M461 198.5 C471.7 198.5 479.5 207.65 479.5 218.5 C479.5 226.375 470.725 233.5 460 233.5 C449.275 233.5 440.5 226.375 440.5 218.5 C440.5 207.65 449.275 198.5 461 198.5Z" fill="none" stroke="#8db3c2" stroke-width="1.15"/><path d="M444 202.5 Q452 197.5 466 198.0 Q472 198.5 475 201.5" fill="none" stroke="#8db3c2" stroke-width="0.9"/><path d="M461 242.5 C471.7 242.5 479.5 251.65 479.5 262.5 C479.5 270.375 470.725 277.5 460 277.5 C449.275 277.5 440.5 270.375 440.5 262.5 C440.5 251.65 449.275 242.5 461 242.5Z" fill="none" stroke="#8db3c2" stroke-width="1.15"/><path d="M444 246.5 Q452 241.5 466 242.0 Q472 242.5 475 245.5" fill="none" stroke="#8db3c2" stroke-width="0.9"/><path d="M438 252 H481" fill="none" stroke="#8db3c2" stroke-width="1.2"/><path d="M461 291.5 C471.7 291.5 479.5 300.65 479.5 311.5 C479.5 319.375 470.725 326.5 460 326.5 C449.275 326.5 440.5 319.375 440.5 311.5 C440.5 300.65 449.275 291.5 461 291.5Z" fill="none" stroke="#8db3c2" stroke-width="1.15"/><path d="M444 295.5 Q452 290.5 466 291.0 Q472 291.5 475 294.5" fill="none" stroke="#8db3c2" stroke-width="0.9"/><path d="M439 307 H481" fill="none" stroke="#8db3c2" stroke-width="1.2"/><path d="M529 198.5 C539.7 198.5 547.5 207.65 547.5 218.5 C547.5 226.375 538.725 233.5 528 233.5 C517.275 233.5 508.5 226.375 508.5 218.5 C508.5 207.65 517.275 198.5 529 198.5Z" fill="none" stroke="#8db3c2" stroke-width="1.15"/><path d="M512 202.5 Q520 197.5 534 198.0 Q540 198.5 543 201.5" fill="none" stroke="#8db3c2" stroke-width="0.9"/><path d="M529 242.5 C539.7 242.5 547.5 251.65 547.5 262.5 C547.5 270.375 538.725 277.5 528 277.5 C517.275 277.5 508.5 270.375 508.5 262.5 C508.5 251.65 517.275 242.5 529 242.5Z" fill="none" stroke="#8db3c2" stroke-width="1.15"/><path d="M512 246.5 Q520 241.5 534 242.0 Q540 242.5 543 245.5" fill="none" stroke="#8db3c2" stroke-width="0.9"/><path d="M506 252 H549" fill="none" stroke="#8db3c2" stroke-width="1.2"/><path d="M529 291.5 C539.7 291.5 547.5 300.65 547.5 311.5 C547.5 319.375 538.725 326.5 528 326.5 C517.275 326.5 508.5 319.375 508.5 311.5 C508.5 300.65 517.275 291.5 529 291.5Z" fill="none" stroke="#8db3c2" stroke-width="1.15"/><path d="M512 295.5 Q520 290.5 534 291.0 Q540 291.5 543 294.5" fill="none" stroke="#8db3c2" stroke-width="0.9"/><path d="M507 307 H549" fill="none" stroke="#8db3c2" stroke-width="1.2"/><path d="M629 197.5 C639.7 197.5 647.5 206.65 647.5 217.5 C647.5 225.375 638.725 232.5 628 232.5 C617.275 232.5 608.5 225.375 608.5 217.5 C608.5 206.65 617.275 197.5 629 197.5Z" fill="none" stroke="#8db3c2" stroke-width="1.15"/><path d="M612 201.5 Q620 196.5 634 197.0 Q640 197.5 643 200.5" fill="none" stroke="#8db3c2" stroke-width="0.9"/><path d="M611 205 Q630 210 650 218" fill="none" stroke="#8db3c2" stroke-width="1.2"/><path d="M697 197.5 C707.7 197.5 715.5 206.65 715.5 217.5 C715.5 225.375 706.725 232.5 696 232.5 C685.275 232.5 676.5 225.375 676.5 217.5 C676.5 206.65 685.275 197.5 697 197.5Z" fill="none" stroke="#8db3c2" stroke-width="1.15"/><path d="M680 201.5 Q688 196.5 702 197.0 Q708 197.5 711 200.5" fill="none" stroke="#8db3c2" stroke-width="0.9"/><path d="M677 217 Q695 210 714 203" fill="none" stroke="#8db3c2" stroke-width="1.2"/><path d="M626 240.5 C636.7 240.5 644.5 249.65 644.5 260.5 C644.5 268.375 635.725 275.5 625 275.5 C614.275 275.5 605.5 268.375 605.5 260.5 C605.5 249.65 614.275 240.5 626 240.5Z" fill="none" stroke="#8db3c2" stroke-width="1.15"/><path d="M609 244.5 Q617 239.5 631 240.0 Q637 240.5 640 243.5" fill="none" stroke="#8db3c2" stroke-width="0.9"/><path d="M606 271 Q628 272 643 258" fill="none" stroke="#8db3c2" stroke-width="1.2"/><path d="M694 240.5 C704.7 240.5 712.5 249.65 712.5 260.5 C712.5 268.375 703.725 275.5 693 275.5 C682.275 275.5 673.5 268.375 673.5 260.5 C673.5 249.65 682.275 240.5 694 240.5Z" fill="none" stroke="#8db3c2" stroke-width="1.15"/><path d="M677 244.5 Q685 239.5 699 240.0 Q705 240.5 708 243.5" fill="none" stroke="#8db3c2" stroke-width="0.9"/><path d="M674 255 Q690 272 713 270" fill="none" stroke="#8db3c2" stroke-width="1.2"/><path d="M624 286.5 C634.7 286.5 642.5 295.65 642.5 306.5 C642.5 314.375 633.725 321.5 623 321.5 C612.275 321.5 603.5 314.375 603.5 306.5 C603.5 295.65 612.275 286.5 624 286.5Z" fill="none" stroke="#8db3c2" stroke-width="1.15"/><path d="M607 290.5 Q615 285.5 629 286.0 Q635 286.5 638 289.5" fill="none" stroke="#8db3c2" stroke-width="0.9"/><path d="M604 319 Q622 306 645 307" fill="none" stroke="#8db3c2" stroke-width="1.2"/><path d="M693 286.5 C703.7 286.5 711.5 295.65 711.5 306.5 C711.5 314.375 702.725 321.5 692 321.5 C681.275 321.5 672.5 314.375 672.5 306.5 C672.5 295.65 681.275 286.5 693 286.5Z" fill="none" stroke="#8db3c2" stroke-width="1.15"/><path d="M676 290.5 Q684 285.5 698 286.0 Q704 286.5 707 289.5" fill="none" stroke="#8db3c2" stroke-width="0.9"/><path d="M670 307 Q695 305 710 321" fill="none" stroke="#8db3c2" stroke-width="1.2"/><path d="M456.7 374.0 C467.4 374.0 475.2 383.15 475.2 394.0 C475.2 401.875 466.425 409.0 455.7 409.0 C444.97499999999997 409.0 436.2 401.875 436.2 394.0 C436.2 383.15 444.97499999999997 374.0 456.7 374.0Z" fill="none" stroke="#8db3c2" stroke-width="1.15"/><path d="M439.7 378.0 Q447.7 373.0 461.7 373.5 Q467.7 374.0 470.7 377.0" fill="none" stroke="#8db3c2" stroke-width="0.9"/><path d="M439.7 378 H471.7" fill="none" stroke="#8db3c2" stroke-width="1.2"/><path d="M437.7 405.5 Q455.7 403 475.7 405.5" fill="none" stroke="#8db3c2" stroke-width="1.2"/><path d="M456.7 418.5 C467.4 418.5 475.2 427.65 475.2 438.5 C475.2 446.375 466.425 453.5 455.7 453.5 C444.97499999999997 453.5 436.2 446.375 436.2 438.5 C436.2 427.65 444.97499999999997 418.5 456.7 418.5Z" fill="none" stroke="#8db3c2" stroke-width="1.15"/><path d="M439.7 422.5 Q447.7 417.5 461.7 418.0 Q467.7 418.5 470.7 421.5" fill="none" stroke="#8db3c2" stroke-width="0.9"/><path d="M433.7 429 H477.7" fill="none" stroke="#8db3c2" stroke-width="1.2"/><path d="M434.7 444.5 H476.7" fill="none" stroke="#8db3c2" stroke-width="1.2"/><path d="M456.7 463.5 C467.4 463.5 475.2 472.65 475.2 483.5 C475.2 491.375 466.425 498.5 455.7 498.5 C444.97499999999997 498.5 436.2 491.375 436.2 483.5 C436.2 472.65 444.97499999999997 463.5 456.7 463.5Z" fill="none" stroke="#8db3c2" stroke-width="1.15"/><path d="M439.7 467.5 Q447.7 462.5 461.7 463.0 Q467.7 463.5 470.7 466.5" fill="none" stroke="#8db3c2" stroke-width="0.9"/><path d="M433.7 480 H477.7" fill="none" stroke="#8db3c2" stroke-width="1.2"/><path d="M434.7 487 H477.7" fill="none" stroke="#8db3c2" stroke-width="1.2"/><path d="M456.7 507.5 C467.4 507.5 475.2 516.65 475.2 527.5 C475.2 535.375 466.425 542.5 455.7 542.5 C444.97499999999997 542.5 436.2 535.375 436.2 527.5 C436.2 516.65 444.97499999999997 507.5 456.7 507.5Z" fill="none" stroke="#8db3c2" stroke-width="1.15"/><path d="M439.7 511.5 Q447.7 506.5 461.7 507.0 Q467.7 507.5 470.7 510.5" fill="none" stroke="#8db3c2" stroke-width="0.9"/><path d="M433.7 529 H478.7" fill="none" stroke="#8db3c2" stroke-width="1.2"/><path d="M524.5 374.0 C535.2 374.0 543.0 383.15 543.0 394.0 C543.0 401.875 534.225 409.0 523.5 409.0 C512.775 409.0 504.0 401.875 504.0 394.0 C504.0 383.15 512.775 374.0 524.5 374.0Z" fill="none" stroke="#8db3c2" stroke-width="1.15"/><path d="M507.5 378.0 Q515.5 373.0 529.5 373.5 Q535.5 374.0 538.5 377.0" fill="none" stroke="#8db3c2" stroke-width="0.9"/><path d="M507.5 378 H539.5" fill="none" stroke="#8db3c2" stroke-width="1.2"/><path d="M505.5 405.5 Q523.5 403 543.5 405.5" fill="none" stroke="#8db3c2" stroke-width="1.2"/><path d="M524.5 418.5 C535.2 418.5 543.0 427.65 543.0 438.5 C543.0 446.375 534.225 453.5 523.5 453.5 C512.775 453.5 504.0 446.375 504.0 438.5 C504.0 427.65 512.775 418.5 524.5 418.5Z" fill="none" stroke="#8db3c2" stroke-width="1.15"/><path d="M507.5 422.5 Q515.5 417.5 529.5 418.0 Q535.5 418.5 538.5 421.5" fill="none" stroke="#8db3c2" stroke-width="0.9"/><path d="M501.5 429 H545.5" fill="none" stroke="#8db3c2" stroke-width="1.2"/><path d="M502.5 444.5 H544.5" fill="none" stroke="#8db3c2" stroke-width="1.2"/><path d="M524.5 463.5 C535.2 463.5 543.0 472.65 543.0 483.5 C543.0 491.375 534.225 498.5 523.5 498.5 C512.775 498.5 504.0 491.375 504.0 483.5 C504.0 472.65 512.775 463.5 524.5 463.5Z" fill="none" stroke="#8db3c2" stroke-width="1.15"/><path d="M507.5 467.5 Q515.5 462.5 529.5 463.0 Q535.5 463.5 538.5 466.5" fill="none" stroke="#8db3c2" stroke-width="0.9"/><path d="M501.5 480 H545.5" fill="none" stroke="#8db3c2" stroke-width="1.2"/><path d="M502.5 487 H545.5" fill="none" stroke="#8db3c2" stroke-width="1.2"/><path d="M524.5 507.5 C535.2 507.5 543.0 516.65 543.0 527.5 C543.0 535.375 534.225 542.5 523.5 542.5 C512.775 542.5 504.0 535.375 504.0 527.5 C504.0 516.65 512.775 507.5 524.5 507.5Z" fill="none" stroke="#8db3c2" stroke-width="1.15"/><path d="M507.5 511.5 Q515.5 506.5 529.5 507.0 Q535.5 507.5 538.5 510.5" fill="none" stroke="#8db3c2" stroke-width="0.9"/><path d="M501.5 529 H546.5" fill="none" stroke="#8db3c2" stroke-width="1.2"/><path d="M622 363.5 C632.7 363.5 640.5 372.65 640.5 383.5 C640.5 391.375 631.725 398.5 621 398.5 C610.275 398.5 601.5 391.375 601.5 383.5 C601.5 372.65 610.275 363.5 622 363.5Z" fill="none" stroke="#8db3c2" stroke-width="1.15"/><path d="M605 367.5 Q613 362.5 627 363.0 Q633 363.5 636 366.5" fill="none" stroke="#8db3c2" stroke-width="0.9"/><path d="M690 363.5 C700.7 363.5 708.5 372.65 708.5 383.5 C708.5 391.375 699.725 398.5 689 398.5 C678.275 398.5 669.5 391.375 669.5 383.5 C669.5 372.65 678.275 363.5 690 363.5Z" fill="none" stroke="#8db3c2" stroke-width="1.15"/><path d="M673 367.5 Q681 362.5 695 363.0 Q701 363.5 704 366.5" fill="none" stroke="#8db3c2" stroke-width="0.9"/><path d="M668 378 H710" fill="none" stroke="#8db3c2" stroke-width="1.2"/><path d="M621 409.5 C631.7 409.5 639.5 418.65 639.5 429.5 C639.5 437.375 630.725 444.5 620 444.5 C609.275 444.5 600.5 437.375 600.5 429.5 C600.5 418.65 609.275 409.5 621 409.5Z" fill="none" stroke="#8db3c2" stroke-width="1.15"/><path d="M604 413.5 Q612 408.5 626 409.0 Q632 409.5 635 412.5" fill="none" stroke="#8db3c2" stroke-width="0.9"/><path d="M601 422 H640" fill="none" stroke="#8db3c2" stroke-width="1.2"/><path d="M690 409.5 C700.7 409.5 708.5 418.65 708.5 429.5 C708.5 437.375 699.725 444.5 689 444.5 C678.275 444.5 669.5 437.375 669.5 429.5 C669.5 418.65 678.275 409.5 690 409.5Z" fill="none" stroke="#8db3c2" stroke-width="1.15"/><path d="M673 413.5 Q681 408.5 695 409.0 Q701 409.5 704 412.5" fill="none" stroke="#8db3c2" stroke-width="0.9"/></svg></div>
<div class="a" style="left:50px;top:158px;width:2.5px;height:446px;background:#1a1a1a"></div><div class="a" style="left:52px;top:157.5px;width:806px;height:1.5px;background:#1e1e1e"></div>
<div class="a" style="left:858px;top:158px;width:8px;height:446px;background:#303030;border-left:1px solid #1e1e1e"></div>
<div class="a" style="left:859px;top:163px;width:0;height:0;border-left:3px solid transparent;border-right:3px solid transparent;border-bottom:3px solid #ddd"></div>
<div class="a" style="left:859px;top:316px;width:6px;height:55px;background:#555;border-radius:1px"></div>
<div class="a" style="left:866px;top:29px;width:2px;height:575px;background:#1e1e1e"></div>
<div class="a" style="left:868px;top:29px;width:27px;height:8px;background:#383838"></div>
<svg style="left:887px;top:31px" width="7" height="5"><path d="M0 2.2 L2.8 0 V4.4Z M3.2 2.2 L6 0 V4.4Z" fill="#c8c8c8"/></svg>
<div class="a" style="left:868px;top:37px;width:27px;height:567px;background:#4e4e4e"></div>
<div class="a" style="left:868px;top:86px;width:27px;height:1px;background:#363636"></div>
<div class="a" style="left:868px;top:156px;width:27px;height:1px;background:#363636"></div>
<div class="a" style="left:868px;top:206px;width:27px;height:1px;background:#363636"></div>
<div class="a" style="left:875px;top:39.5px;width:12px;height:1.5px;background:#1c1c1c"></div>
<div class="a" style="left:875px;top:88.5px;width:12px;height:1.5px;background:#1c1c1c"></div>
<div class="a" style="left:875px;top:158.5px;width:12px;height:1.5px;background:#1c1c1c"></div>
<svg style="left:0;top:0" width="1100" height="604"><path d="M875 55 Q875 48.5 882 48.5 Q888 48.5 888 53 Q888 55 885.5 55 Q884 56 885 58 Q884 60.5 880 60 Q875 59.5 875 55Z" fill="#dedede"/><circle cx="878" cy="54" r="1" fill="#4b4b4b"/><circle cx="880.5" cy="51.5" r="1" fill="#4b4b4b"/><circle cx="884" cy="51.5" r="1" fill="#4b4b4b"/><circle cx="880" cy="57" r="1" fill="#4b4b4b"/><rect x="875.5" y="69.5" width="11" height="8.5" fill="#dedede"/><rect x="877" y="71" width="2" height="2" fill="#333"/><rect x="877" y="74.5" width="2" height="2" fill="#333"/><rect x="880.2" y="71" width="2" height="2" fill="#333"/><rect x="880.2" y="74.5" width="2" height="2" fill="#333"/><rect x="883.4" y="71" width="2" height="2" fill="#333"/><rect x="883.4" y="74.5" width="2" height="2" fill="#333"/><rect x="875.5" y="97" width="1.5" height="12" fill="#dedede"/><rect x="877.5" y="99" width="6" height="3.5" fill="#dedede"/><rect x="877.5" y="104" width="9" height="3.5" fill="#dedede"/><circle cx="881" cy="123" r="5.8" fill="#dedede"/><rect x="880" y="121.5" width="2" height="5" fill="#333"/><circle cx="881" cy="119.5" r="1" fill="#333"/><rect x="876" y="137.5" width="10" height="10" fill="none" stroke="#dedede" stroke-width="1.4" stroke-dasharray="1.5 1.3"/><rect x="875" y="167" width="2" height="11" fill="#dedede"/><rect x="878" y="168" width="2" height="10" fill="#dedede"/><path d="M881 168 L883 167.5 L887 177.5 L885 178 Z" fill="#dedede"/><circle cx="877" cy="195.5" r="2.2" fill="#dedede"/><circle cx="881" cy="192" r="1.8" fill="#dedede"/><circle cx="884.5" cy="188.5" r="1.5" fill="#dedede"/></svg>
<div class="a" style="left:895px;top:29px;width:2px;height:575px;background:#1e1e1e"></div>
<div class="a" style="left:897px;top:29px;width:203px;height:8px;background:#383838"></div>
<svg style="left:1092px;top:31px" width="7" height="5"><path d="M2.8 2.2 L0 0 V4.4Z M6 2.2 L3.2 0 V4.4Z" fill="#c8c8c8"/></svg>
<div class="a" style="left:897px;top:37px;width:203px;height:12px;background:#333"></div>
<div class="a" style="left:897px;top:37px;width:45px;height:12px;background:#4a4a4a;border-top:1px solid #565656;border-right:1px solid #565656"></div>
<div class="t" style="left:902px;top:38.5px;font-size:8px;font-weight:bold;color:#eaeaea">Properties</div>
<div class="a" style="left:897px;top:49px;width:203px;height:279px;background:#4a4a4a"></div>
<svg style="left:918px;top:66px" width="13" height="12"><rect x="0.5" y="0.5" width="12" height="11" fill="#5a5a5a" stroke="#bdbdbd" stroke-width="1"/><rect x="2" y="2" width="9" height="8" fill="#666" stroke="#999" stroke-width="0.6"/><text x="3" y="9" font-family="Liberation Sans" font-size="7" font-weight="bold" fill="#d8d8d8">Fl</text></svg>
<div class="t" style="left:950px;top:57px;font-size:9px;color:#dcdcdc">Document</div>
<div class="t" style="left:950px;top:78px;font-size:9px;color:#dcdcdc">FaceRigging.fla</div>
<div class="a" style="left:897px;top:94px;width:196px;height:1px;background:#363636"></div>
<div class="a" style="left:897px;top:94.5px;width:196px;height:14.5px;background:linear-gradient(#565656,#4e4e4e);border-top:1.5px solid #2e2e2e;border-bottom:1.5px solid #2e2e2e"></div>
<div class="a" style="left:901px;top:99px;width:0;height:0;border-left:3.5px solid transparent;border-right:3.5px solid transparent;border-top:4px solid #e0e0e0"></div>
<div class="t" style="left:911px;top:97px;font-size:9px;color:#e0e0e0">Publish</div>
<div class="t" style="left:919px;top:116px;font-size:9px;color:#d0d0d0">Profile:</div>
<div class="t" style="left:950px;top:116px;font-size:9px;color:#d8d8d8">Default</div>
<div class="a" style="left:950px;top:128px;width:85px;height:13px;background:linear-gradient(#555,#4a4a4a);border:1px solid #333;border-radius:1px"></div>
<div class="t" style="left:955px;top:130px;font-size:9px;color:#e0e0e0">Publish Settings...</div>
<div class="a" style="left:897px;top:146px;width:196px;height:1px;background:#3a3a3a"></div>
<div class="t" style="left:919px;top:152px;font-size:9px;color:#d0d0d0">Target:</div>
<div class="a" style="left:950px;top:151.5px;width:122px;height:12px;background:linear-gradient(#555,#4b4b4b);border:1px solid #333;border-radius:1px"></div>
<div class="a" style="left:1059px;top:152.5px;width:1px;height:10px;background:#3c3c3c"></div>
<div class="a" style="left:1063px;top:156.5px;width:0;height:0;border-left:3px solid transparent;border-right:3px solid transparent;border-top:3.5px solid #ddd"></div>
<div class="t" style="left:922px;top:172px;font-size:9px;color:#d0d0d0">Script:</div>
<div class="a" style="left:950px;top:171.5px;width:122px;height:12px;background:linear-gradient(#555,#4b4b4b);border:1px solid #333;border-radius:1px"></div>
<div class="a" style="left:1059px;top:172.5px;width:1px;height:10px;background:#3c3c3c"></div>
<div class="a" style="left:1063px;top:176.5px;width:0;height:0;border-left:3px solid transparent;border-right:3px solid transparent;border-top:3.5px solid #ddd"></div>
<div class="t" style="left:955px;top:173.0px;font-size:9px;color:#dedede">ActionScript 3.0</div>
<svg style="left:1078px;top:172px" width="11" height="11"><path d="M1.5 9.5 L6 5" stroke="#e4e4e4" stroke-width="2.4" stroke-linecap="round"/><path d="M4.8 4.6 A3.3 3.3 0 0 1 8.6 0.6 L7 2.6 L8.5 4.2 L10.5 2.6 A3.3 3.3 0 0 1 6.4 6.4 Z" fill="#e4e4e4"/></svg>
<div class="a" style="left:897px;top:189px;width:196px;height:1px;background:#3a3a3a"></div>
<div class="t" style="left:923px;top:198px;font-size:9px;color:#d0d0d0">Class:</div>
<div class="a" style="left:950px;top:197.5px;width:122px;height:12px;background:#b5b5b5;border:1px solid #2e2e2e;border-radius:1px"></div>
<svg style="left:1079px;top:198px" width="10" height="10"><path d="M1 9 L1.5 7 L6.5 2 L8 3.5 L3 8.5 Z" fill="#d8d8d8"/><path d="M6.8 1.2 L7.8 0.2 L9.8 2.2 L8.8 3.2z" fill="#d8d8d8"/></svg>
<div class="a" style="left:897px;top:216px;width:196px;height:1px;background:#3a3a3a"></div>
<div class="a" style="left:897px;top:216.5px;width:196px;height:14.5px;background:linear-gradient(#565656,#4e4e4e);border-top:1.5px solid #2e2e2e;border-bottom:1.5px solid #2e2e2e"></div>
<div class="a" style="left:901px;top:221px;width:0;height:0;border-left:3.5px solid transparent;border-right:3.5px solid transparent;border-top:4px solid #e0e0e0"></div>
<div class="t" style="left:911px;top:219px;font-size:9px;color:#e0e0e0">Properties</div>
<div class="t" style="left:930px;top:238px;font-size:9px;color:#d0d0d0">FPS:</div>
<div class="t" style="left:954px;top:238px;font-size:9px;color:#c9a43c;border-bottom:1px dotted #9a8040;line-height:9px">24.00</div>
<div class="a" style="left:897px;top:253px;width:196px;height:1px;background:#3c3c3c"></div>
<div class="t" style="left:928px;top:259px;font-size:9px;color:#d0d0d0">Size:</div>
<div class="t" style="left:954px;top:258px;font-size:9px;color:#c9a43c;border-bottom:1px dotted #9a8040;line-height:9px">1280</div>
<div class="t" style="left:988px;top:259px;font-size:9px;color:#cfcfcf">x</div>
<div class="t" style="left:1006px;top:258px;font-size:9px;color:#c9a43c;border-bottom:1px dotted #9a8040;line-height:9px">720</div>
<div class="t" style="left:1045px;top:259px;font-size:9px;color:#cfcfcf">px</div>
<svg style="left:1077px;top:258px" width="11" height="11"><path d="M1.5 9.5 L6 5" stroke="#e4e4e4" stroke-width="2.4" stroke-linecap="round"/><path d="M4.8 4.6 A3.3 3.3 0 0 1 8.6 0.6 L7 2.6 L8.5 4.2 L10.5 2.6 A3.3 3.3 0 0 1 6.4 6.4 Z" fill="#e4e4e4"/></svg>
<div class="a" style="left:897px;top:272px;width:196px;height:1px;background:#3c3c3c"></div>
<div class="t" style="left:922px;top:279px;font-size:9px;color:#d0d0d0">Stage:</div>
<div class="a" style="left:953px;top:277.5px;width:22px;height:12px;background:#fff;border:1px solid #222;border-radius:1px"></div>
<div class="a" style="left:897px;top:299.5px;width:196px;height:14.5px;background:linear-gradient(#565656,#4e4e4e);border-top:1.5px solid #2e2e2e;border-bottom:1.5px solid #2e2e2e"></div>
<div class="a" style="left:901px;top:304px;width:0;height:0;border-left:3.5px solid transparent;border-right:3.5px solid transparent;border-top:4px solid #e0e0e0"></div>
<div class="t" style="left:911px;top:302px;font-size:9px;color:#e0e0e0">SWF History</div>
<div class="a" style="left:930px;top:316px;width:33px;height:12px;border:1px solid #555;background:#4c4c4c"></div>
<div class="t" style="left:938px;top:318px;font-size:9px;color:#6a6a6a">Log</div>
<div class="a" style="left:1018px;top:316px;width:33px;height:12px;border:1px solid #555;background:#4c4c4c"></div>
<div class="t" style="left:1024px;top:318px;font-size:9px;color:#6a6a6a">Clear</div>
<div class="a" style="left:1093px;top:95px;width:7px;height:233px;background:#3e3e3e"></div>
<div class="a" style="left:1094px;top:99px;width:0;height:0;border-left:3px solid transparent;border-right:3px solid transparent;border-bottom:3px solid #ddd"></div>
<div class="a" style="left:1094px;top:321px;width:0;height:0;border-left:3px solid transparent;border-right:3px solid transparent;border-top:3px solid #ddd"></div>
<div class="a" style="left:1087px;top:42px;width:0;height:0;border-left:2px solid transparent;border-right:2px solid transparent;border-top:2px solid #ddd"></div>
<div class="a" style="left:1091px;top:40px;width:6px;height:6px;border-top:1px solid #aaa;border-bottom:1px solid #aaa;background:linear-gradient(#aaa,#aaa) 0 2px/6px 1px no-repeat"></div>
<div class="a" style="left:897px;top:328px;width:203px;height:2px;background:#2a2a2a"></div>
<div class="a" style="left:897px;top:330px;width:203px;height:12px;background:#333"></div>
<div class="a" style="left:897px;top:330px;width:63px;height:12px;background:#4a4a4a;border-top:1px solid #565656;border-right:1px solid #565656"></div>
<div class="t" style="left:902px;top:331.5px;font-size:8px;font-weight:bold;color:#eaeaea">KeyframeCaddy</div>
<div class="a" style="left:897px;top:342px;width:203px;height:262px;background:#dcdcdc"></div>
<div class="a" style="left:899.5px;top:345px;width:93px;height:18px;border-radius:4px;background:linear-gradient(#fbfbfb,#e2e2e2);border:1px solid #b8b8b8"></div>
<div class="t" style="left:913.5px;top:349.5px;font-size:8.5px;font-weight:bold;letter-spacing:-0.2px;color:#4a4a4a">Load Thumbnails</div>
<div class="a" style="left:1086px;top:335px;width:0;height:0;border-left:2px solid transparent;border-right:2px solid transparent;border-top:2px solid #ddd"></div>
<div class="a" style="left:1090px;top:333px;width:7px;height:7px;border-top:1px solid #999;border-bottom:1px solid #999;background:linear-gradient(#999,#999) 0 2px/7px 1px no-repeat"></div>
<svg style="left:1064px;top:346px" width="36" height="16"><circle cx="6" cy="6" r="4.8" fill="none" stroke="#333" stroke-width="1.4"/><path d="M3.5 6 H8.5" stroke="#333" stroke-width="1.3"/><path d="M9.5 9.5 L13 13" stroke="#333" stroke-width="2"/><circle cx="24.5" cy="6" r="4.8" fill="none" stroke="#333" stroke-width="1.4"/><path d="M22 6 H27 M24.5 3.5 V8.5" stroke="#333" stroke-width="1.3"/><path d="M28 9.5 L31.5 13" stroke="#333" stroke-width="2"/></svg>
<div class="a" style="left:1093px;top:367px;width:6px;height:231px;background:#c4c4c4;border-radius:3px"></div>
<div class="a" style="left:1093.5px;top:412.5px;width:5px;height:80px;background:#f6f6f6;border-radius:2.5px"></div>
<svg style="left:1074px;top:594px" width="12" height="10"><path d="M0.5 0.5 L0.5 9 L3 7 L5 10 H8 L5.5 6.5 L9 6.5Z" fill="#8a8a8a"/></svg>
<div class="a" style="left:897px;top:342px;width:1px;height:262px;background:#b0b0b0"></div>
<svg style="left:0;top:0" width="1100" height="604"><defs><clipPath id="m1"><path d="M979.5 383.5 Q997.5 382.5 1015.5 383.5 Q1011.9 392.5 1004.7 392.5 L990.3 392.5 Q983.1 392.5 979.5 383.5 Z"/></clipPath><clipPath id="m2"><path d="M1018.0 383.0 Q1036 382.0 1054.0 383.0 Q1050.4 393.0 1043.2 393.0 L1028.8 393.0 Q1021.6 393.0 1018.0 383.0 Z"/></clipPath><clipPath id="m3"><path d="M979.5 423.5 Q997.5 423.5 1015.5 423.5 Q1011.9 430.5 1004.7 430.5 L990.3 430.5 Q983.1 430.5 979.5 423.5 Z"/></clipPath><clipPath id="m4"><path d="M1019.0 421.5 Q1036 421.5 1053.0 421.5 Q1049.6 432.5 1042.8 432.5 L1029.2 432.5 Q1022.4 432.5 1019.0 421.5 Z"/></clipPath><clipPath id="m5"><path d="M1057.5 419.5 Q1074 419.5 1090.5 419.5 Q1087.2 434.5 1080.6 434.5 L1067.4 434.5 Q1060.8 434.5 1057.5 419.5 Z"/></clipPath><clipPath id="m6"><path d="M902.5 460.5 Q919.5 460.5 936.5 460.5 Q933.1 471.5 926.3 471.5 L912.7 471.5 Q905.9 471.5 902.5 460.5 Z"/></clipPath><clipPath id="m7"><path d="M941.0 459.0 Q958 459.0 975.0 459.0 Q971.6 473.0 964.8 473.0 L951.2 473.0 Q944.4 473.0 941.0 459.0 Z"/></clipPath><clipPath id="m8"><path d="M979.0 458.0 Q997.5 458.0 1016.0 458.0 Q1012.3 474.0 1004.9 474.0 L990.1 474.0 Q982.7 474.0 979.0 458.0 Z"/></clipPath><clipPath id="m9"><path d="M902.0 499.5 Q919.5 499.5 937.0 499.5 Q933.5 509.5 926.5 509.5 L912.5 509.5 Q905.5 509.5 902.0 499.5 Z"/></clipPath><clipPath id="m10"><path d="M941.0 499.5 Q958 499.5 975.0 499.5 Q971.6 509.5 964.8 509.5 L951.2 509.5 Q944.4 509.5 941.0 499.5 Z"/></clipPath><clipPath id="a1"><path d="M902.0 547.5 Q906.2 539.5 919.5 539.5 Q932.8 539.5 937.0 547.5 Q919.5 545.5 902.0 547.5 Z"/></clipPath><clipPath id="a2"><path d="M941.0 549.0 Q945.08 537.0 958 537.0 Q970.92 537.0 975.0 549.0 Q958 546.0 941.0 549.0 Z"/></clipPath><clipPath id="a3"><path d="M979.5 550.5 Q983.82 535.5 997.5 535.5 Q1011.18 535.5 1015.5 550.5 Q997.5 546.75 979.5 550.5 Z"/></clipPath><clipPath id="a4"><path d="M1019.0 549.5 Q1023.08 536.5 1036 536.5 Q1048.92 536.5 1053.0 549.5 Q1036 546.25 1019.0 549.5 Z"/></clipPath><clipPath id="a5"><path d="M1057.0 550.5 Q1061.08 535.5 1074 535.5 Q1086.92 535.5 1091.0 550.5 Q1074 546.75 1057.0 550.5 Z"/></clipPath><clipPath id="m11"><path d="M902.0 574.0 Q919.5 574.0 937.0 574.0 Q933.5 590.0 926.5 590.0 L912.5 590.0 Q905.5 590.0 902.0 574.0 Z"/></clipPath><clipPath id="m12"><path d="M1018.5 577.5 Q1036 577.5 1053.5 577.5 Q1050.0 586.5 1043.0 586.5 L1029.0 586.5 Q1022.0 586.5 1018.5 577.5 Z"/></clipPath><clipPath id="m13"><path d="M1057.5 577.5 Q1074 577.5 1090.5 577.5 Q1087.2 586.5 1080.6 586.5 L1067.4 586.5 Q1060.8 586.5 1057.5 577.5 Z"/></clipPath></defs><path d="M910.4 385.4 Q904 379 903.3 375 Q905 371.5 911 372.5" fill="none" stroke="#77433a" stroke-width="1.8" stroke-linecap="round" stroke-linejoin="round"/><path d="M912 379 Q926 379 932 386 Q936 394 928 399.5 Q921 400 919 393 Q916 385 912 379Z" fill="#fafafa"/><path d="M918 389 L934 389 Q936 396 928 399.5 Q921 400 919 393Z" fill="#2a2a2e"/><path d="M912 379 Q926 379 932 386 Q936 394 928 399.5 Q921 400 919 393 Q916 385 912 379Z" fill="none" stroke="#77433a" stroke-width="2.2" stroke-linecap="round" stroke-linejoin="round"/><path d="M914 398.8 L914.5 404 L921 404.4" fill="none" stroke="#77433a" stroke-width="1.6" stroke-linecap="round" stroke-linejoin="round"/><path d="M959 371.3 Q949 377 947.7 380.5 Q948 384 949.8 386 Q950 392 951.2 397.4 Q953 404 957.6 405.8 Q963 405 968.8 403" fill="none" stroke="#77433a" stroke-width="1.7" stroke-linecap="round" stroke-linejoin="round"/><path d="M955 382 Q964 386 966.5 395 Q958 394 955 382Z" fill="#5a4a22" stroke="#77433a" stroke-width="2" stroke-linecap="round" stroke-linejoin="round"/><g clip-path="url(#m1)"><rect x="979.5" y="371.5" width="36" height="23" fill="#fafafa"/><ellipse cx="997.5" cy="392.5" rx="10.799999999999999" ry="2.6999999999999997" fill="#d98c8a"/></g><path d="M979.5 383.5 Q997.5 382.5 1015.5 383.5 Q1011.9 392.5 1004.7 392.5 L990.3 392.5 Q983.1 392.5 979.5 383.5 Z" fill="none" stroke="#77433a" stroke-width="1.7" stroke-linejoin="round"/><g clip-path="url(#m2)"><rect x="1018.0" y="371.0" width="36" height="24" fill="#161616"/><rect x="1018.0" y="371.0" width="36" height="15.8" fill="#fafafa"/><ellipse cx="1036" cy="393.0" rx="10.799999999999999" ry="3.0" fill="#d98c8a"/></g><path d="M1018.0 383.0 Q1036 382.0 1054.0 383.0 Q1050.4 393.0 1043.2 393.0 L1028.8 393.0 Q1021.6 393.0 1018.0 383.0 Z" fill="none" stroke="#77433a" stroke-width="1.7" stroke-linejoin="round"/><path d="M1057 383 H1090 L1085 392 M1062 392 Q1074 384 1088 388" fill="none" stroke="#77433a" stroke-width="1.4" stroke-linecap="round" stroke-linejoin="round"/><path d="M1060 384 H1087 L1083 389 Q1072 385 1062 390Z" fill="#fafafa"/><path d="M903 425 Q920 422 936 424 M903 425 Q903 430 906 433 M903 425 Q904 421 906 419" fill="none" stroke="#77433a" stroke-width="1.5" stroke-linecap="round" stroke-linejoin="round"/><path d="M941 422 Q941 430 958 430 Q974 430 975 422" fill="none" stroke="#77433a" stroke-width="1.6" stroke-linecap="round" stroke-linejoin="round"/><g clip-path="url(#m3)"><rect x="979.5" y="411.5" width="36" height="21" fill="#fafafa"/><rect x="979.5" y="427.35" width="36" height="3.5" fill="#ead0c8"/></g><path d="M979.5 423.5 Q997.5 423.5 1015.5 423.5 Q1011.9 430.5 1004.7 430.5 L990.3 430.5 Q983.1 430.5 979.5 423.5 Z" fill="none" stroke="#77433a" stroke-width="1.7" stroke-linejoin="round"/><g clip-path="url(#m4)"><rect x="1019.0" y="409.5" width="34" height="25" fill="#fafafa"/><rect x="1019.0" y="427.55" width="34" height="5.5" fill="#ead0c8"/><rect x="1019.0" y="425.9" width="34" height="2.75" fill="#161616"/></g><path d="M1019.0 421.5 Q1036 421.5 1053.0 421.5 Q1049.6 432.5 1042.8 432.5 L1029.2 432.5 Q1022.4 432.5 1019.0 421.5 Z" fill="none" stroke="#77433a" stroke-width="1.7" stroke-linejoin="round"/><g clip-path="url(#m5)"><rect x="1057.5" y="407.5" width="33" height="29" fill="#161616"/><rect x="1057.5" y="407.5" width="33" height="17.7" fill="#fafafa"/><rect x="1057.5" y="425.5" width="33" height="3.75" fill="#161616"/></g><path d="M1057.5 419.5 Q1074 419.5 1090.5 419.5 Q1087.2 434.5 1080.6 434.5 L1067.4 434.5 Q1060.8 434.5 1057.5 419.5 Z" fill="none" stroke="#77433a" stroke-width="1.7" stroke-linejoin="round"/><g clip-path="url(#m6)"><rect x="902.5" y="448.5" width="34" height="25" fill="#fafafa"/><ellipse cx="919.5" cy="471.5" rx="10.2" ry="3.3" fill="#d98c8a"/></g><path d="M902.5 460.5 Q919.5 460.5 936.5 460.5 Q933.1 471.5 926.3 471.5 L912.7 471.5 Q905.9 471.5 902.5 460.5 Z" fill="none" stroke="#77433a" stroke-width="1.7" stroke-linejoin="round"/><g clip-path="url(#m7)"><rect x="941.0" y="447.0" width="34" height="28" fill="#161616"/><rect x="941.0" y="447.0" width="34" height="17.32" fill="#fafafa"/><ellipse cx="958" cy="473.0" rx="10.2" ry="4.2" fill="#d98c8a"/></g><path d="M941.0 459.0 Q958 459.0 975.0 459.0 Q971.6 473.0 964.8 473.0 L951.2 473.0 Q944.4 473.0 941.0 459.0 Z" fill="none" stroke="#77433a" stroke-width="1.7" stroke-linejoin="round"/><g clip-path="url(#m8)"><rect x="979.0" y="446.0" width="37" height="30" fill="#161616"/><rect x="979.0" y="446.0" width="37" height="18.08" fill="#fafafa"/><ellipse cx="997.5" cy="474.0" rx="11.1" ry="4.8" fill="#d98c8a"/></g><path d="M979.0 458.0 Q997.5 458.0 1016.0 458.0 Q1012.3 474.0 1004.9 474.0 L990.1 474.0 Q982.7 474.0 979.0 458.0 Z" fill="none" stroke="#77433a" stroke-width="1.7" stroke-linejoin="round"/><g transform="translate(0 0)"><path d="M1041 456.5 Q1030 457 1022 466 Q1017 476 1024 481 Q1032 484 1040 481 Q1046 476 1044 469 Q1040 464 1041 456.5Z" fill="#fafafa"/><path d="M1020.5 469.5 H1045 Q1046 477 1040 481 Q1032 484 1024 481 Q1018 476 1020.5 469.5Z" fill="#2e2e2e"/><path d="M1041 456.5 Q1030 457 1022 466 Q1017 476 1024 481 Q1032 484 1040 481 Q1046 476 1044 469 Q1040 464 1041 456.5Z" fill="none" stroke="#77433a" stroke-width="2.4" stroke-linejoin="round"/><path d="M1042 448.5 Q1049 451 1049.5 459" fill="none" stroke="#77433a" stroke-width="1.8" stroke-linecap="round"/><path d="M1052 476 Q1050 482 1045 484" fill="none" stroke="#77433a" stroke-width="1.8" stroke-linecap="round"/></g><g transform="translate(0 0)"><path d="M1077.5 455.5 Q1066 458 1061.5 467 Q1062 473 1070 472 Q1076 469 1075 462 Q1076 458 1077.5 455.5Z" fill="#b06a5a" stroke="#77433a" stroke-width="2.2" stroke-linejoin="round"/><path d="M1066 467 Q1068 463 1071 463 Q1072 467 1068 469Z" fill="#2a2a2a"/><path d="M1072 448.5 Q1084 448 1087.5 456 Q1086 460 1083 462" fill="none" stroke="#77433a" stroke-width="2" stroke-linecap="round"/><path d="M1063 482 Q1075 484 1081 481 Q1084 476 1083.5 472" fill="none" stroke="#77433a" stroke-width="1.8" stroke-linecap="round"/></g><g clip-path="url(#m9)"><rect x="902.0" y="487.5" width="35" height="24" fill="#fafafa"/><ellipse cx="919.5" cy="509.5" rx="10.5" ry="3.0" fill="#d98c8a"/></g><path d="M902.0 499.5 Q919.5 499.5 937.0 499.5 Q933.5 509.5 926.5 509.5 L912.5 509.5 Q905.5 509.5 902.0 499.5 Z" fill="none" stroke="#77433a" stroke-width="1.7" stroke-linejoin="round"/><g clip-path="url(#m10)"><rect x="941.0" y="487.5" width="34" height="24" fill="#fafafa"/><ellipse cx="958" cy="509.5" rx="10.2" ry="3.0" fill="#d98c8a"/></g><path d="M941.0 499.5 Q958 499.5 975.0 499.5 Q971.6 509.5 964.8 509.5 L951.2 509.5 Q944.4 509.5 941.0 499.5 Z" fill="none" stroke="#77433a" stroke-width="1.7" stroke-linejoin="round"/><path d="M979 500 Q997 497 1016 499 L1013 509 Q997 507 981 509 Z" fill="#fafafa" stroke="#77433a" stroke-width="1.3" stroke-linecap="round" stroke-linejoin="round"/><path d="M1018 504 H1052 M1019 500 V508 M1052 500 V508" fill="none" stroke="#77433a" stroke-width="1.5" stroke-linecap="round" stroke-linejoin="round"/><path d="M1058 506 Q1058 501 1066 501 H1090" fill="none" stroke="#77433a" stroke-width="1.5" stroke-linecap="round" stroke-linejoin="round"/><g clip-path="url(#a1)"><rect x="902.0" y="537.5" width="35" height="12" fill="#fafafa"/></g><path d="M902.0 547.5 Q906.2 539.5 919.5 539.5 Q932.8 539.5 937.0 547.5 Q919.5 545.5 902.0 547.5 Z" fill="none" stroke="#77433a" stroke-width="1.7" stroke-linejoin="round"/><g clip-path="url(#a2)"><rect x="941.0" y="535.0" width="34" height="16" fill="#fafafa"/><rect x="941.0" y="542.4" width="34" height="2.4000000000000004" fill="#161616"/></g><path d="M941.0 549.0 Q945.08 537.0 958 537.0 Q970.92 537.0 975.0 549.0 Q958 546.0 941.0 549.0 Z" fill="none" stroke="#77433a" stroke-width="1.7" stroke-linejoin="round"/><g clip-path="url(#a3)"><rect x="979.5" y="533.5" width="36" height="19" fill="#fafafa"/><rect x="979.5" y="540.75" width="36" height="6.0" fill="#161616"/></g><path d="M979.5 550.5 Q983.82 535.5 997.5 535.5 Q1011.18 535.5 1015.5 550.5 Q997.5 546.75 979.5 550.5 Z" fill="none" stroke="#77433a" stroke-width="1.7" stroke-linejoin="round"/><g clip-path="url(#a4)"><rect x="1019.0" y="534.5" width="34" height="17" fill="#fafafa"/><ellipse cx="1036" cy="549.5" rx="11.899999999999999" ry="4.55" fill="#d98c8a"/></g><path d="M1019.0 549.5 Q1023.08 536.5 1036 536.5 Q1048.92 536.5 1053.0 549.5 Q1036 546.25 1019.0 549.5 Z" fill="none" stroke="#77433a" stroke-width="1.7" stroke-linejoin="round"/><g clip-path="url(#a5)"><rect x="1057.0" y="533.5" width="34" height="19" fill="#fafafa"/><rect x="1057.0" y="540.75" width="34" height="6.0" fill="#161616"/><ellipse cx="1074" cy="550.5" rx="11.899999999999999" ry="5.25" fill="#d98c8a"/></g><path d="M1057.0 550.5 Q1061.08 535.5 1074 535.5 Q1086.92 535.5 1091.0 550.5 Q1074 546.75 1057.0 550.5 Z" fill="none" stroke="#77433a" stroke-width="1.7" stroke-linejoin="round"/><g clip-path="url(#m11)"><rect x="902.0" y="562.0" width="35" height="30" fill="#161616"/><rect x="902.0" y="562.0" width="35" height="18.08" fill="#fafafa"/><ellipse cx="919.5" cy="590.0" rx="10.5" ry="4.8" fill="#d98c8a"/></g><path d="M902.0 574.0 Q919.5 574.0 937.0 574.0 Q933.5 590.0 926.5 590.0 L912.5 590.0 Q905.5 590.0 902.0 574.0 Z" fill="none" stroke="#77433a" stroke-width="1.7" stroke-linejoin="round"/><g transform="translate(-77.5 115)"><path d="M1041 456.5 Q1030 457 1022 466 Q1017 476 1024 481 Q1032 484 1040 481 Q1046 476 1044 469 Q1040 464 1041 456.5Z" fill="#fafafa"/><path d="M1020.5 469.5 H1045 Q1046 477 1040 481 Q1032 484 1024 481 Q1018 476 1020.5 469.5Z" fill="#2e2e2e"/><path d="M1041 456.5 Q1030 457 1022 466 Q1017 476 1024 481 Q1032 484 1040 481 Q1046 476 1044 469 Q1040 464 1041 456.5Z" fill="none" stroke="#77433a" stroke-width="2.4" stroke-linejoin="round"/><path d="M1042 448.5 Q1049 451 1049.5 459" fill="none" stroke="#77433a" stroke-width="1.8" stroke-linecap="round"/><path d="M1052 476 Q1050 482 1045 484" fill="none" stroke="#77433a" stroke-width="1.8" stroke-linecap="round"/></g><g transform="translate(-77.3 116)"><path d="M1077.5 455.5 Q1066 458 1061.5 467 Q1062 473 1070 472 Q1076 469 1075 462 Q1076 458 1077.5 455.5Z" fill="#b06a5a" stroke="#77433a" stroke-width="2.2" stroke-linejoin="round"/><path d="M1066 467 Q1068 463 1071 463 Q1072 467 1068 469Z" fill="#2a2a2a"/><path d="M1072 448.5 Q1084 448 1087.5 456 Q1086 460 1083 462" fill="none" stroke="#77433a" stroke-width="2" stroke-linecap="round"/><path d="M1063 482 Q1075 484 1081 481 Q1084 476 1083.5 472" fill="none" stroke="#77433a" stroke-width="1.8" stroke-linecap="round"/></g><g clip-path="url(#m12)"><rect x="1018.5" y="565.5" width="35" height="23" fill="#fafafa"/><ellipse cx="1036" cy="586.5" rx="10.5" ry="2.6999999999999997" fill="#d98c8a"/></g><path d="M1018.5 577.5 Q1036 577.5 1053.5 577.5 Q1050.0 586.5 1043.0 586.5 L1029.0 586.5 Q1022.0 586.5 1018.5 577.5 Z" fill="none" stroke="#77433a" stroke-width="1.7" stroke-linejoin="round"/><g clip-path="url(#m13)"><rect x="1057.5" y="565.5" width="33" height="23" fill="#fafafa"/><rect x="1057.5" y="582.45" width="33" height="4.5" fill="#ead0c8"/></g><path d="M1057.5 577.5 Q1074 577.5 1090.5 577.5 Q1087.2 586.5 1080.6 586.5 L1067.4 586.5 Q1060.8 586.5 1057.5 577.5 Z" fill="none" stroke="#77433a" stroke-width="1.7" stroke-linejoin="round"/></svg></body></html>
